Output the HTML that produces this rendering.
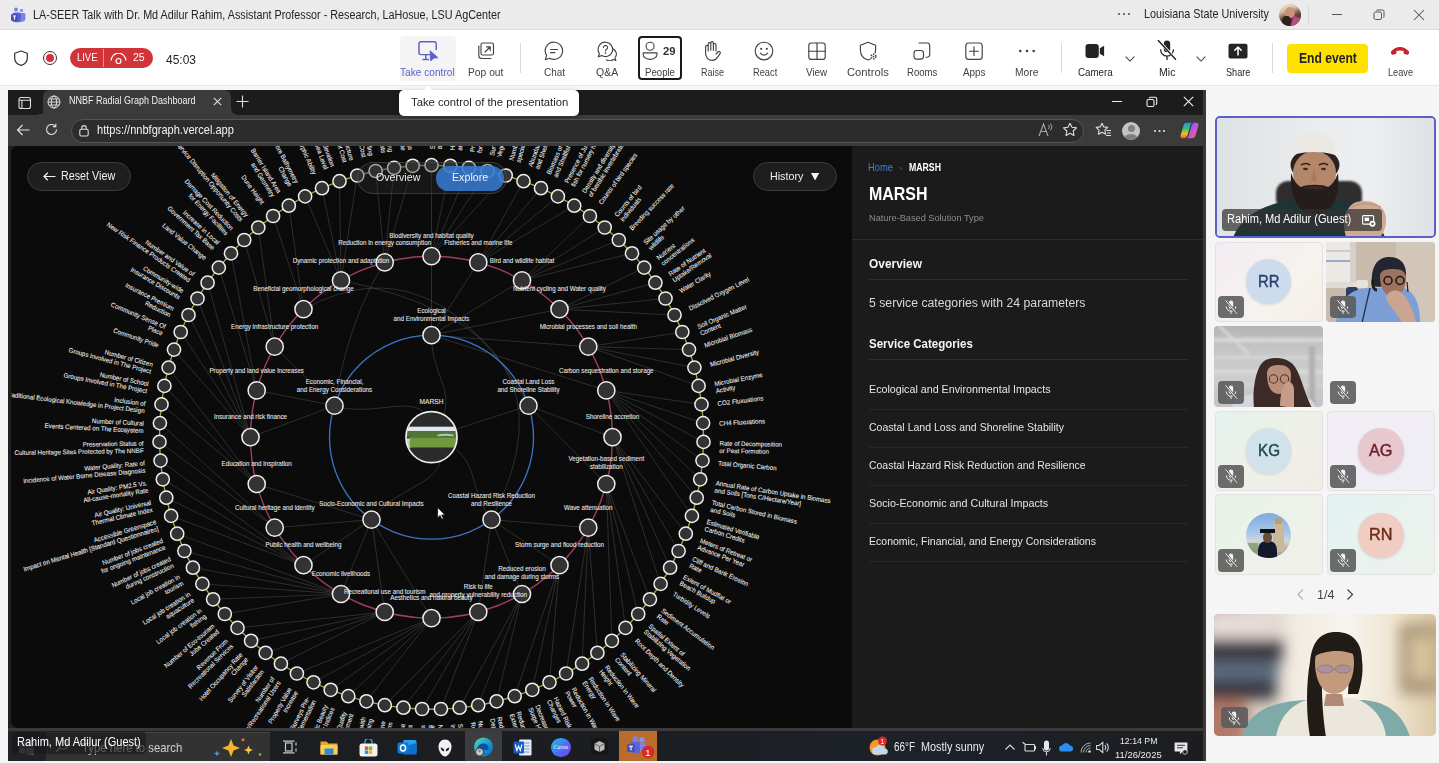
<!DOCTYPE html>
<html><head><meta charset="utf-8"><style>*{box-sizing:border-box;margin:0;padding:0}
html,body{width:1439px;height:763px;overflow:hidden;background:#f5f5f5;font-family:"Liberation Sans",sans-serif}
.a{position:absolute}
.t{position:absolute;white-space:nowrap;line-height:1}
.tile{position:absolute;border-radius:4px;overflow:hidden}
.mute{position:absolute;border-radius:4px;background:rgba(92,92,92,.9)}
.mute svg{position:absolute;left:0;top:0}
</style></head><body>
<div class="a" style="left:0;top:0;width:1439px;height:29px;background:#ebebeb"></div>
<div class="a" style="left:0;top:29px;width:1439px;height:1px;background:#dcdcdc"></div>
<svg class="a" style="left:10px;top:7px" width="16" height="16" viewBox="0 0 16 16"><circle cx="6" cy="2.6" r="2" fill="#7a80ea"/><circle cx="11.5" cy="3.5" r="1.7" fill="#8b90ee"/><path d="M9 6h5a1.4 1.4 0 0 1 1.4 1.4v3.8a3.5 3.5 0 0 1-3.5 3.5H9z" fill="#7b83eb"/><rect x="2.5" y="5.5" width="8.5" height="9.8" rx="2.3" fill="#5b62d6"/><rect x="1" y="7" width="7" height="7" rx="1.2" fill="#4650c0"/><path d="M2.9 9h3.2M4.5 9v3.6" stroke="#fff" stroke-width="1.1"/></svg>
<div class="t " style="left:33.00px;top:8.96px;font-size:12.21px;color:#242424;transform:scaleX(0.8842);transform-origin:0 0;">LA-SEER Talk with Dr. Md Adilur Rahim, Assistant Professor - Research, LaHosue, LSU AgCenter</div>
<svg class="a" style="left:1117px;top:11px" width="14" height="6" viewBox="0 0 14 6"><circle cx="2" cy="3" r="1.1" fill="#555"/><circle cx="7" cy="3" r="1.1" fill="#555"/><circle cx="12" cy="3" r="1.1" fill="#555"/></svg>
<div class="t " style="left:1143.80px;top:7.69px;font-size:12.06px;color:#242424;transform:scaleX(0.8970);transform-origin:0 0;">Louisiana State University</div>
<div class="a" style="left:1278.5px;top:3.5px;width:22.5px;height:22.5px;border-radius:50%;overflow:hidden;background:linear-gradient(160deg,#efe6da 0%,#d8c0a8 30%,#6a4a3a 55%,#3a2a28 80%,#b06090 100%)"><div style="position:absolute;left:6px;top:3px;width:10px;height:11px;border-radius:50%;background:#c8957a"></div><div style="position:absolute;left:3px;top:12px;width:9px;height:12px;border-radius:40%;background:#2e2220"></div><div style="position:absolute;left:13px;top:13px;width:8px;height:10px;background:#b84a8a;transform:rotate(20deg)"></div></div>
<div class="a" style="left:1308px;top:5px;width:1px;height:20px;background:#d8d8d8"></div>
<div class="a" style="left:1332px;top:14px;width:10px;height:1px;background:#555"></div>
<svg class="a" style="left:1373px;top:9px" width="12" height="12" viewBox="0 0 12 12"><rect x="1" y="3" width="7.5" height="7.5" rx="1.6" fill="none" stroke="#555" stroke-width="1"/><path d="M3.2 1.6A1.6 1.6 0 0 1 4.6 1H9.4A1.6 1.6 0 0 1 11 2.6V7.4A1.6 1.6 0 0 1 10.4 8.8" fill="none" stroke="#555" stroke-width="1"/></svg>
<svg class="a" style="left:1413px;top:9px" width="12" height="12" viewBox="0 0 12 12"><path d="M1 1l10 10M11 1L1 11" stroke="#555" stroke-width="1.05"/></svg>
<div class="a" style="left:0;top:30px;width:1439px;height:55px;background:#ffffff"></div>
<div class="a" style="left:0;top:85px;width:1439px;height:1px;background:#e8e8e8"></div>
<svg class="a" style="left:13px;top:50px" width="16" height="16" viewBox="0 0 16 16"><path d="M8 1l6.3 2.3v4.6c0 3.6-2.6 6.4-6.3 7.4C4.3 14.3 1.7 11.5 1.7 7.9V3.3z" fill="none" stroke="#333" stroke-width="1.2" stroke-linejoin="round"/></svg>
<div class="a" style="left:42.5px;top:50.8px;width:14.5px;height:14.5px;border-radius:50%;border:1.4px solid #333"></div>
<div class="a" style="left:45.7px;top:54px;width:8.1px;height:8.1px;border-radius:50%;background:#d92f3a"></div>
<div class="a" style="left:70px;top:48px;width:82.5px;height:20px;border-radius:10px;background:#d13438"></div>
<div class="t " style="left:77.00px;top:52.47px;font-size:10.90px;color:#fff;transform:scaleX(0.8666);transform-origin:0 0;">LIVE</div>
<div class="a" style="left:103px;top:49px;width:1px;height:18px;background:#ee8c90"></div>
<svg class="a" style="left:109.5px;top:52.5px" width="17" height="12" viewBox="0 0 17 12"><path d="M1.2 7.5a7.3 7.3 0 0 1 14.6 0" fill="none" stroke="#fff" stroke-width="1.2"/><circle cx="8.5" cy="8" r="2.5" fill="none" stroke="#fff" stroke-width="1.2"/></svg>
<div class="t " style="left:133.30px;top:52.47px;font-size:10.90px;color:#fff;transform:scaleX(0.9669);transform-origin:0 0;">25</div>
<div class="t " style="left:165.80px;top:52.60px;font-size:13.23px;color:#242424;transform:scaleX(0.9054);transform-origin:0 0;">45:03</div>
<div class="a" style="left:400px;top:36.3px;width:56px;height:44.5px;background:#f4f4f4;border-radius:4px"></div>
<svg class="a" style="left:418.2px;top:41.0px" width="20" height="20" viewBox="0 0 20 20"><g fill="none" stroke="#5b5fc7" stroke-width="1.45" stroke-linejoin="round"><path d="M12 13.6H2.8A1.8 1.8 0 0 1 1 11.8V2.6A1.8 1.8 0 0 1 2.8 .8h13.6A1.8 1.8 0 0 1 18.2 2.6V9"/><path d="M4.5 18.4h6.5M7.8 13.8v4.6"/></g><path d="M12.2 9.8L20 16.8 15.9 17.1 12.6 20z" fill="#5b5fc7" stroke="#5b5fc7" stroke-width=".8" stroke-linejoin="round"/></svg>
<div class="t " style="left:400.30px;top:66.79px;font-size:10.76px;color:#5b5fc7;transform:scaleX(0.9435);transform-origin:0 0;">Take control</div>
<div class="t " style="left:468.30px;top:66.79px;font-size:10.76px;color:#424242;transform:scaleX(0.9554);transform-origin:0 0;">Pop out</div>
<div class="t " style="left:543.70px;top:66.79px;font-size:10.76px;color:#424242;transform:scaleX(0.9253);transform-origin:0 0;">Chat</div>
<div class="t " style="left:595.80px;top:66.79px;font-size:10.76px;color:#424242;transform:scaleX(0.9759);transform-origin:0 0;">Q&amp;A</div>
<div class="t " style="left:644.70px;top:66.79px;font-size:10.76px;color:#424242;transform:scaleX(0.8954);transform-origin:0 0;">People</div>
<div class="t " style="left:700.70px;top:66.79px;font-size:10.76px;color:#424242;transform:scaleX(0.8369);transform-origin:0 0;">Raise</div>
<div class="t " style="left:752.50px;top:66.79px;font-size:10.76px;color:#424242;transform:scaleX(0.8620);transform-origin:0 0;">React</div>
<div class="t " style="left:806.30px;top:66.79px;font-size:10.76px;color:#424242;transform:scaleX(0.9168);transform-origin:0 0;">View</div>
<div class="t " style="left:846.50px;top:66.79px;font-size:10.76px;color:#424242;transform:scaleX(1.0433);transform-origin:0 0;">Controls</div>
<div class="t " style="left:906.70px;top:66.79px;font-size:10.76px;color:#424242;transform:scaleX(0.8887);transform-origin:0 0;">Rooms</div>
<div class="t " style="left:963.00px;top:66.79px;font-size:10.76px;color:#424242;transform:scaleX(0.9175);transform-origin:0 0;">Apps</div>
<div class="t " style="left:1015.30px;top:66.79px;font-size:10.76px;color:#424242;transform:scaleX(0.9542);transform-origin:0 0;">More</div>
<div class="t " style="left:1077.80px;top:66.79px;font-size:10.76px;color:#242424;transform:scaleX(0.9062);transform-origin:0 0;">Camera</div>
<div class="t " style="left:1158.70px;top:66.79px;font-size:10.76px;color:#242424;transform:scaleX(0.9865);transform-origin:0 0;">Mic</div>
<div class="t " style="left:1225.50px;top:66.79px;font-size:10.76px;color:#242424;transform:scaleX(0.8531);transform-origin:0 0;">Share</div>
<div class="t " style="left:1387.80px;top:66.79px;font-size:10.76px;color:#424242;transform:scaleX(0.8564);transform-origin:0 0;">Leave</div>
<svg class="a" style="left:476.2px;top:40.5px" width="20" height="20" viewBox="0 0 20 20"><g fill="none" stroke="#424242" stroke-width="1.15" stroke-linecap="round" stroke-linejoin="round"><rect x="5" y="2" width="12.5" height="12" rx="1.8"/><path d="M2.8 5v9.5a3 3 0 0 0 3 3H15"/><path d="M9 11l5-5M10.5 5.8H14.2V9.5"/></g></svg>
<div class="a" style="left:520px;top:43px;width:1px;height:30px;background:#d9d9d9"></div>
<svg class="a" style="left:544.2px;top:40.5px" width="20" height="20" viewBox="0 0 20 20"><g fill="none" stroke="#424242" stroke-width="1.15" stroke-linecap="round" stroke-linejoin="round"><path d="M10 1.2a8.6 8.6 0 1 1-4.4 16L1.3 18.6l1.3-4.2A8.6 8.6 0 0 1 10 1.2z"/><path d="M6.5 8.5h7M6.5 11.6h4.5"/></g></svg>
<svg class="a" style="left:596.7px;top:40.5px" width="20" height="20" viewBox="0 0 20 20"><g fill="none" stroke="#424242" stroke-width="1.15" stroke-linecap="round" stroke-linejoin="round"><path d="M8.5 1.2a7.2 7.2 0 1 1-3.7 13.4l-3.5 1.2 1.1-3.3A7.2 7.2 0 0 1 8.5 1.2z"/><path d="M15.6 7.6a6 6 0 0 1 2.4 9.4l.9 2.4-2.8-.9a6 6 0 0 1-6.6.4"/><path d="M6.4 6.4a2.1 2.1 0 1 1 3.2 1.9c-.8.5-1.1.9-1.1 1.7"/></g><circle cx="8.5" cy="12" r=".85" fill="#424242"/></svg>
<div class="a" style="left:637.5px;top:36.3px;width:44.5px;height:43.7px;border:2px solid #1a1a1a;border-radius:4px"></div>
<svg class="a" style="left:641.8px;top:40.8px" width="19" height="19" viewBox="0 0 20 20"><g fill="none" stroke="#424242" stroke-width="1.15" stroke-linecap="round" stroke-linejoin="round"><circle cx="8.5" cy="5.5" r="4.2"/><path d="M1.2 12.5h14.6v1.4c0 3.2-3.4 5.4-7.3 5.4S1.2 17.1 1.2 13.9z"/></g></svg>
<div class="t " style="left:663.30px;top:45.52px;font-size:10.61px;color:#333;font-weight:bold;transform:scaleX(1.0613);transform-origin:0 0;">29</div>
<svg class="a" style="left:702.0px;top:40.5px" width="20" height="20" viewBox="0 0 20 20"><g transform="translate(20,0) scale(-1,1)"><g fill="none" stroke="#424242" stroke-width="1.15" stroke-linecap="round" stroke-linejoin="round"><path d="M6 10V3.8a1.3 1.3 0 0 1 2.6 0V9.2M8.6 9.2V1.9a1.3 1.3 0 0 1 2.6 0v7.3M11.2 9.2V2.9a1.3 1.3 0 0 1 2.6 0V10M13.8 10V5.6a1.3 1.3 0 0 1 2.6 0v6.6c0 4-2.8 7.2-6.6 7.2-2.5 0-4.1-1.3-5.4-3.3L1.9 12.6a1.3 1.3 0 0 1 2.1-1.6L6 13"/></g></g></svg>
<svg class="a" style="left:754.2px;top:40.5px" width="20" height="20" viewBox="0 0 20 20"><g fill="none" stroke="#424242" stroke-width="1.15" stroke-linecap="round" stroke-linejoin="round"><circle cx="10" cy="10" r="8.8"/><path d="M6.3 12.2a4.6 4.6 0 0 0 7.4 0"/></g><circle cx="7.2" cy="7.8" r="1.1" fill="#424242"/><circle cx="12.8" cy="7.8" r="1.1" fill="#424242"/></svg>
<svg class="a" style="left:806.7px;top:40.5px" width="20" height="20" viewBox="0 0 20 20"><g fill="none" stroke="#424242" stroke-width="1.15" stroke-linecap="round" stroke-linejoin="round"><rect x="1.8" y="2" width="16.4" height="16.4" rx="2.5"/><path d="M10 2v16.4M1.8 10.2h16.4"/></g></svg>
<svg class="a" style="left:859.0px;top:40.5px" width="20" height="20" viewBox="0 0 20 20"><g fill="none" stroke="#424242" stroke-width="1.15" stroke-linecap="round" stroke-linejoin="round"><path d="M9 1.2l7.6 3v5c0 4.6-3 8.3-7.6 9.8C4.4 17.5 1.4 13.8 1.4 9.2v-5z"/></g><circle cx="14.5" cy="15.5" r="3.6" fill="#fff"/><g fill="none" stroke="#424242" stroke-width="1.6" stroke-dasharray="1.3 1"><circle cx="14.5" cy="15.5" r="2.3"/></g><circle cx="14.5" cy="15.5" r=".8" fill="#424242"/></svg>
<svg class="a" style="left:911.7px;top:40.5px" width="20" height="20" viewBox="0 0 20 20"><g fill="none" stroke="#424242" stroke-width="1.15" stroke-linecap="round" stroke-linejoin="round"><path d="M7 2h8.2a2.5 2.5 0 0 1 2.5 2.5v9.2a2.5 2.5 0 0 1-2.5 2.5H14"/><rect x="2" y="9.5" width="9.5" height="8.6" rx="2.5"/></g></svg>
<svg class="a" style="left:964.4px;top:40.5px" width="20" height="20" viewBox="0 0 20 20"><g fill="none" stroke="#424242" stroke-width="1.15" stroke-linecap="round" stroke-linejoin="round"><rect x="1.8" y="2" width="16.4" height="16.4" rx="3"/><path d="M10 5.8v8.8M5.6 10.2h8.8"/></g></svg>
<svg class="a" style="left:1016.5px;top:40.5px" width="20" height="20" viewBox="0 0 20 20"><circle cx="3.3" cy="10" r="1.35" fill="#424242"/><circle cx="10" cy="10" r="1.35" fill="#424242"/><circle cx="16.7" cy="10" r="1.35" fill="#424242"/></svg>
<div class="a" style="left:1061px;top:43px;width:1px;height:30px;background:#d9d9d9"></div>
<svg class="a" style="left:1085.0px;top:40.5px" width="20" height="20" viewBox="0 0 20 20"><rect x="0.5" y="3" width="13.3" height="14" rx="3" fill="#242424"/><path d="M14.8 7.3l4.3-2.6v10.6l-4.3-2.6z" fill="#242424"/></svg>
<svg class="a" style="left:1124.5px;top:56px" width="10" height="6" viewBox="0 0 10 6"><path d="M.6 .6l4.4 4.4 4.4-4.4" fill="none" stroke="#424242" stroke-width="1.05"/></svg>
<svg class="a" style="left:1156.6px;top:40.3px" width="20" height="20" viewBox="0 0 20 20"><rect x="6.8" y="0.5" width="6.4" height="11.8" rx="3.2" fill="#242424"/><path d="M3.6 9.8a6.4 6.4 0 0 0 12.8 0M10 16.2v3.6" fill="none" stroke="#242424" stroke-width="1.3" stroke-linecap="round"/><path d="M1.5 0.3l17 18.5" stroke="#fff" stroke-width="2.6"/><path d="M1.3 0.5l17.2 18.8" stroke="#242424" stroke-width="1.4" stroke-linecap="round"/></svg>
<svg class="a" style="left:1195.5px;top:56px" width="10" height="6" viewBox="0 0 10 6"><path d="M.6 .6l4.4 4.4 4.4-4.4" fill="none" stroke="#424242" stroke-width="1.05"/></svg>
<svg class="a" style="left:1227.5px;top:40.5px" width="20" height="20" viewBox="0 0 20 20"><rect x="0.5" y="2.8" width="19" height="14.6" rx="2" fill="#242424"/><path d="M10 14V6.2M6.8 9.3L10 6.1l3.2 3.2" fill="none" stroke="#fff" stroke-width="1.5" stroke-linecap="round" stroke-linejoin="round"/></svg>
<div class="a" style="left:1272px;top:43px;width:1px;height:30px;background:#d9d9d9"></div>
<div class="a" style="left:1286.5px;top:43.7px;width:81.5px;height:29px;background:#ffe100;border-radius:4px"></div>
<div class="t " style="left:1298.60px;top:51.12px;font-size:14.97px;color:#242424;font-weight:bold;transform:scaleX(0.8091);transform-origin:0 0;">End event</div>
<svg class="a" style="left:1390.3px;top:40.0px" width="20" height="20" viewBox="0 0 20 20"><path d="M0.8 11.8c2.4-3.4 5.8-4.9 9.2-4.9s6.8 1.5 9.2 4.9l-.5 2.3c-.2.6-.8.9-1.4.7l-3-.9a1 1 0 0 1-.7-1V11.1c-2.4-.8-4.8-.8-7.2 0v1.8a1 1 0 0 1-.7 1l-3 .9c-.6.2-1.2-.1-1.4-.7z" fill="#c4262e"/></svg>
<div class="a" style="left:0;top:86px;width:1439px;height:677px;background:#f5f5f5"></div>
<div class="a" style="left:8px;top:90px;width:1198px;height:671px;background:#202020"></div>
<div class="a" style="left:8px;top:90px;width:35px;height:25px;background:#1c1c1c;border-bottom-right-radius:6px"></div>
<div class="a" style="left:43px;top:90px;width:188px;height:25px;background:#3b3b3b;border-radius:7px 7px 0 0"></div>
<div class="a" style="left:231px;top:90px;width:975px;height:25px;background:#1c1c1c;border-bottom-left-radius:6px"></div>
<div class="a" style="left:8px;top:114px;width:1198px;height:32px;background:#3b3b3b"></div>
<div class="a" style="left:8px;top:108px;width:6px;height:6px;background:#3b3b3b"></div>
<div class="a" style="left:8px;top:90px;width:35px;height:25px;background:#1c1c1c;border-bottom-left-radius:0;border-bottom-right-radius:7px"></div>
<div class="a" style="left:225px;top:108px;width:12px;height:7px;background:#3b3b3b"></div>
<div class="a" style="left:231px;top:90px;width:975px;height:25px;background:#1c1c1c;border-bottom-left-radius:7px"></div>
<svg class="a" style="left:17.5px;top:95.5px" width="14" height="14" viewBox="0 0 14 14"><rect x="1" y="1.5" width="11.5" height="11" rx="2" fill="none" stroke="#ddd" stroke-width="1.1"/><path d="M1 4.3h11.5M3.9 4.3v8.2" stroke="#ddd" stroke-width="1.1"/></svg>
<svg class="a" style="left:47px;top:95px" width="14" height="14" viewBox="0 0 14 14"><g fill="none" stroke="#ddd" stroke-width="1"><circle cx="7" cy="7" r="6"/><ellipse cx="7" cy="7" rx="2.7" ry="6"/><path d="M1 7h12M1.8 4h10.4M1.8 10h10.4"/></g></svg>
<div class="t " style="left:68.60px;top:94.92px;font-size:11.19px;color:#f0f0f0;transform:scaleX(0.8033);transform-origin:0 0;">NNBF Radial Graph Dashboard</div>
<svg class="a" style="left:213px;top:96.5px" width="9" height="9" viewBox="0 0 9 9"><path d="M.8 .8l7.4 7.4M8.2 .8L.8 8.2" stroke="#ddd" stroke-width="1.1"/></svg>
<svg class="a" style="left:236px;top:94.5px" width="13" height="13" viewBox="0 0 13 13"><path d="M6.5 .5v12M.5 6.5h12" stroke="#ddd" stroke-width="1.1"/></svg>
<div class="a" style="left:1111.5px;top:101px;width:10px;height:1.2px;background:#eee"></div>
<svg class="a" style="left:1146px;top:96px" width="12" height="12" viewBox="0 0 12 12"><rect x="1" y="3.5" width="7" height="7" rx="1.5" fill="none" stroke="#eee" stroke-width="1.1"/><path d="M3.3 2.2A1.5 1.5 0 0 1 4.6 1.3h4.6A1.5 1.5 0 0 1 10.7 2.8v4.6A1.5 1.5 0 0 1 9.8 8.7" fill="none" stroke="#eee" stroke-width="1.1"/></svg>
<svg class="a" style="left:1183px;top:96px" width="11" height="11" viewBox="0 0 11 11"><path d="M.8 .8l9.4 9.4M10.2 .8L.8 10.2" stroke="#eee" stroke-width="1.1"/></svg>
<svg class="a" style="left:16px;top:124px" width="14" height="12" viewBox="0 0 14 12"><path d="M13.5 6H1.5M6.5 1L1.5 6l5 5" fill="none" stroke="#e6e6e6" stroke-width="1.1"/></svg>
<svg class="a" style="left:45px;top:123px" width="13" height="13" viewBox="0 0 13 13"><path d="M11.5 6.5a5 5 0 1 1-1.7-3.8" fill="none" stroke="#e6e6e6" stroke-width="1.1"/><path d="M10.8 .8v2.8H8" fill="none" stroke="#e6e6e6" stroke-width="1.1"/></svg>
<div class="a" style="left:71px;top:118.5px;width:1013px;height:24.5px;border-radius:12.5px;background:#2c2c2c;border:1px solid #555"></div>
<svg class="a" style="left:78px;top:124px" width="12" height="13" viewBox="0 0 12 13"><rect x="1.8" y="5.3" width="8.4" height="6.7" rx="1.4" fill="none" stroke="#ddd" stroke-width="1.1"/><path d="M3.8 5.3V3.8a2.2 2.2 0 0 1 4.4 0v1.5" fill="none" stroke="#ddd" stroke-width="1.1"/></svg>
<div class="t " style="left:97.20px;top:124.91px;font-size:11.92px;color:#f2f2f2;transform:scaleX(0.9274);transform-origin:0 0;">https://nnbfgraph.vercel.app</div>
<svg class="a" style="left:1038px;top:122px" width="15" height="16" viewBox="0 0 15 16"><path d="M1 14L5.5 2 10 14M2.8 9.5h5.4" fill="none" stroke="#aaa" stroke-width="1.1"/><path d="M10.5 3a3 3 0 0 1 0 4M12.5 1.5a5.5 5.5 0 0 1 0 7" fill="none" stroke="#aaa" stroke-width=".9"/></svg>
<svg class="a" style="left:1062px;top:122px" width="16" height="16" viewBox="0 0 16 16"><path d="M8 1.2l2 4.1 4.5.6-3.3 3.1.8 4.5L8 11.3l-4 2.2.8-4.5L1.5 5.9 6 5.3z" fill="none" stroke="#ddd" stroke-width="1.1" stroke-linejoin="round"/></svg>
<svg class="a" style="left:1095px;top:122px" width="17" height="16" viewBox="0 0 17 16"><path d="M7 1.2l1.8 3.7 4 .5-2.9 2.8.7 4L7 10.3l-3.6 2 .7-4L1.2 5.4l4-.5z" fill="none" stroke="#ddd" stroke-width="1.1" stroke-linejoin="round"/><path d="M11.5 8.5h4.5M12 11h4M11 13.5h5" stroke="#ddd" stroke-width="1.1"/></svg>
<div class="a" style="left:1122px;top:122px;width:18px;height:18px;border-radius:50%;background:#c4c4c4;overflow:hidden"><div style="position:absolute;left:5.5px;top:3px;width:7px;height:7px;border-radius:50%;background:#808080"></div><div style="position:absolute;left:2px;top:11.5px;width:14px;height:10px;border-radius:50%;background:#808080"></div></div>
<svg class="a" style="left:1153px;top:129px" width="13" height="4" viewBox="0 0 13 4"><circle cx="2" cy="2" r="1.1" fill="#ddd"/><circle cx="6.5" cy="2" r="1.1" fill="#ddd"/><circle cx="11" cy="2" r="1.1" fill="#ddd"/></svg>
<svg class="a" style="left:1180px;top:122px" width="19" height="17" viewBox="0 0 19 17"><defs><linearGradient id="cop1" x1="0" y1="0" x2="0" y2="1"><stop offset="0" stop-color="#2a8cf5"/><stop offset=".4" stop-color="#3cc46a"/><stop offset=".72" stop-color="#f5c02a"/><stop offset="1" stop-color="#f25a2a"/></linearGradient><linearGradient id="cop2" x1="0" y1="0" x2="1" y2="1"><stop offset="0" stop-color="#4a6cf0"/><stop offset=".45" stop-color="#b455e8"/><stop offset="1" stop-color="#ff6a6a"/></linearGradient></defs><path d="M7 .8h6.2c-1.4 0-2.2.7-2.7 2.2L7.6 12.8c-.6 2-1.7 3.4-3.8 3.4H2.6C1 16.2.1 15 .6 13.4L3.6 3.2C4.1 1.6 5.2.8 7 .8z" fill="url(#cop1)"/><path d="M12 16.2H5.8c1.4 0 2.2-.7 2.7-2.2l2.9-9.8c.6-2 1.7-3.4 3.8-3.4h1.2c1.6 0 2.5 1.2 2 2.8l-3 10.2c-.5 1.6-1.6 2.4-3.4 2.4z" fill="url(#cop2)"/></svg>
<div class="a" style="left:11px;top:146px;width:1193px;height:582px;background:#0b0b0b;border-radius:8px;overflow:hidden"><div style="position:absolute;left:0;top:0"><svg class="graph" width="840" height="582" viewBox="11 146 840 582">
<rect x="11" y="146" width="840" height="582" fill="#0b0b0b"/>
<g fill="none" stroke="#8c8c8c" stroke-opacity="0.36" stroke-width="0.75">
<path d="M431.5,437.2C463.8,392.7 431.5,382.2 431.5,335.2"/>
<path d="M431.5,437.2C483.8,420.2 483.8,420.2 528.5,405.7"/>
<path d="M431.5,437.2C483.8,454.2 463.8,481.7 491.5,519.7"/>
<path d="M431.5,437.2C463.8,481.7 399.2,481.7 371.5,519.7"/>
<path d="M431.5,437.2C431.5,382.2 379.2,420.2 334.5,405.7"/>
<path d="M431.5,335.2L431.5,256.2"/>
<path d="M431.5,335.2L478.3,262.4"/>
<path d="M431.5,335.2L522.0,280.4"/>
<path d="M431.5,335.2L559.5,309.2"/>
<path d="M431.5,335.2L588.3,346.7"/>
<path d="M431.5,335.2L606.3,390.4"/>
<path d="M528.5,405.7L612.5,437.2"/>
<path d="M528.5,405.7L606.3,484.0"/>
<path d="M528.5,405.7Q434,238 303.5,309.2"/>
<path d="M491.5,519.7L588.3,527.7"/>
<path d="M491.5,519.7L559.5,565.2"/>
<path d="M491.5,519.7L522.0,594.0"/>
<path d="M491.5,519.7L478.3,612.0"/>
<path d="M491.5,519.7Q590,330 341.0,280.4"/>
<path d="M371.5,519.7L431.5,618.2"/>
<path d="M371.5,519.7L384.7,612.0"/>
<path d="M371.5,519.7L341.0,594.0"/>
<path d="M371.5,519.7L303.5,565.2"/>
<path d="M371.5,519.7L274.7,527.7"/>
<path d="M371.5,519.7L256.7,484.0"/>
<path d="M334.5,405.7L250.5,437.2"/>
<path d="M334.5,405.7L256.7,390.4"/>
<path d="M334.5,405.7L274.7,346.7"/>
<path d="M334.5,405.7Q348,320 384.7,262.4"/>
<path d="M431.5,256.2L431.5,165.2"/>
<path d="M431.5,256.2L450.3,165.8"/>
<path d="M431.5,256.2L468.9,167.8"/>
<path d="M431.5,256.2L487.4,171.0"/>
<path d="M431.5,256.2L505.7,175.5"/>
<path d="M478.3,262.4L523.5,181.2"/>
<path d="M478.3,262.4L541.0,188.2"/>
<path d="M478.3,262.4L557.9,196.4"/>
<path d="M478.3,262.4L574.2,205.7"/>
<path d="M522.0,280.4L589.9,216.0"/>
<path d="M522.0,280.4L604.7,227.5"/>
<path d="M522.0,280.4L618.8,240.0"/>
<path d="M522.0,280.4L632.0,253.3"/>
<path d="M559.5,309.2L644.2,267.6"/>
<path d="M559.5,309.2L655.4,282.7"/>
<path d="M559.5,309.2L665.5,298.5"/>
<path d="M559.5,309.2L674.5,315.0"/>
<path d="M588.3,346.7L682.3,332.0"/>
<path d="M588.3,346.7L689.0,349.6"/>
<path d="M588.3,346.7L694.4,367.6"/>
<path d="M588.3,346.7L698.6,385.9"/>
<path d="M606.3,390.4L701.5,404.4"/>
<path d="M606.3,390.4L703.1,423.1"/>
<path d="M606.3,390.4L703.5,441.9"/>
<path d="M606.3,390.4L702.5,460.6"/>
<path d="M606.3,390.4L700.2,479.3"/>
<path d="M606.3,390.4L696.7,497.7"/>
<path d="M606.3,390.4L691.9,515.9"/>
<path d="M612.5,437.2L685.8,533.7"/>
<path d="M612.5,437.2L678.6,551.0"/>
<path d="M612.5,437.2L670.1,567.7"/>
<path d="M612.5,437.2L660.6,583.9"/>
<path d="M606.3,484.0L649.9,599.3"/>
<path d="M606.3,484.0L638.2,614.0"/>
<path d="M606.3,484.0L625.5,627.9"/>
<path d="M606.3,484.0L611.9,640.8"/>
<path d="M588.3,527.7L597.4,652.8"/>
<path d="M588.3,527.7L582.1,663.7"/>
<path d="M588.3,527.7L566.1,673.5"/>
<path d="M559.5,565.2L549.5,682.3"/>
<path d="M559.5,565.2L532.3,689.8"/>
<path d="M559.5,565.2L514.7,696.2"/>
<path d="M522.0,594.0L496.6,701.3"/>
<path d="M522.0,594.0L478.2,705.2"/>
<path d="M522.0,594.0L459.6,707.7"/>
<path d="M478.3,612.0L440.9,709.0"/>
<path d="M478.3,612.0L422.1,709.0"/>
<path d="M478.3,612.0L403.4,707.7"/>
<path d="M478.3,612.0L384.8,705.2"/>
<path d="M431.5,618.2L366.4,701.3"/>
<path d="M431.5,618.2L348.3,696.2"/>
<path d="M431.5,618.2L330.7,689.8"/>
<path d="M431.5,618.2L313.5,682.3"/>
<path d="M431.5,618.2L296.9,673.5"/>
<path d="M384.7,612.0L280.9,663.7"/>
<path d="M384.7,612.0L265.6,652.8"/>
<path d="M384.7,612.0L251.1,640.8"/>
<path d="M384.7,612.0L237.5,627.9"/>
<path d="M341.0,594.0L224.8,614.0"/>
<path d="M341.0,594.0L213.1,599.3"/>
<path d="M341.0,594.0L202.4,583.9"/>
<path d="M341.0,594.0L192.9,567.7"/>
<path d="M341.0,594.0L184.4,551.0"/>
<path d="M341.0,594.0L177.2,533.7"/>
<path d="M303.5,565.2L171.1,515.9"/>
<path d="M303.5,565.2L166.3,497.7"/>
<path d="M303.5,565.2L162.8,479.3"/>
<path d="M303.5,565.2L160.5,460.6"/>
<path d="M274.7,527.7L159.5,441.9"/>
<path d="M274.7,527.7L159.9,423.1"/>
<path d="M256.7,484.0L161.5,404.4"/>
<path d="M256.7,484.0L164.4,385.9"/>
<path d="M256.7,484.0L168.6,367.6"/>
<path d="M250.5,437.2L174.0,349.6"/>
<path d="M250.5,437.2L180.7,332.0"/>
<path d="M250.5,437.2L188.5,315.0"/>
<path d="M250.5,437.2L197.5,298.5"/>
<path d="M250.5,437.2L207.6,282.7"/>
<path d="M256.7,390.4L218.8,267.6"/>
<path d="M256.7,390.4L231.0,253.3"/>
<path d="M274.7,346.7L244.2,240.0"/>
<path d="M274.7,346.7L258.3,227.5"/>
<path d="M303.5,309.2L273.1,216.0"/>
<path d="M303.5,309.2L288.8,205.7"/>
<path d="M341.0,280.4L305.1,196.4"/>
<path d="M341.0,280.4L322.0,188.2"/>
<path d="M341.0,280.4L339.5,181.2"/>
<path d="M341.0,280.4L357.3,175.5"/>
<path d="M384.7,262.4L375.6,171.0"/>
<path d="M384.7,262.4L394.1,167.8"/>
<path d="M384.7,262.4L412.7,165.8"/>
</g>
<circle cx="431.5" cy="437.2" r="102.0" fill="none" stroke="#3f72c4" stroke-width="1.3"/>
<circle cx="431.5" cy="437.2" r="181.0" fill="none" stroke="#a33d5e" stroke-width="1.4"/>
<circle cx="431.5" cy="437.2" r="272.0" fill="none" stroke="#7fb33a" stroke-width="1.4"/>
<g fill="#333" stroke="#eee" stroke-width="1.5">
<circle cx="431.5" cy="165.2" r="6.6"/>
<circle cx="450.3" cy="165.8" r="6.6"/>
<circle cx="468.9" cy="167.8" r="6.6"/>
<circle cx="487.4" cy="171.0" r="6.6"/>
<circle cx="505.7" cy="175.5" r="6.6"/>
<circle cx="523.5" cy="181.2" r="6.6"/>
<circle cx="541.0" cy="188.2" r="6.6"/>
<circle cx="557.9" cy="196.4" r="6.6"/>
<circle cx="574.2" cy="205.7" r="6.6"/>
<circle cx="589.9" cy="216.0" r="6.6"/>
<circle cx="604.7" cy="227.5" r="6.6"/>
<circle cx="618.8" cy="240.0" r="6.6"/>
<circle cx="632.0" cy="253.3" r="6.6"/>
<circle cx="644.2" cy="267.6" r="6.6"/>
<circle cx="655.4" cy="282.7" r="6.6"/>
<circle cx="665.5" cy="298.5" r="6.6"/>
<circle cx="674.5" cy="315.0" r="6.6"/>
<circle cx="682.3" cy="332.0" r="6.6"/>
<circle cx="689.0" cy="349.6" r="6.6"/>
<circle cx="694.4" cy="367.6" r="6.6"/>
<circle cx="698.6" cy="385.9" r="6.6"/>
<circle cx="701.5" cy="404.4" r="6.6"/>
<circle cx="703.1" cy="423.1" r="6.6"/>
<circle cx="703.5" cy="441.9" r="6.6"/>
<circle cx="702.5" cy="460.6" r="6.6"/>
<circle cx="700.2" cy="479.3" r="6.6"/>
<circle cx="696.7" cy="497.7" r="6.6"/>
<circle cx="691.9" cy="515.9" r="6.6"/>
<circle cx="685.8" cy="533.7" r="6.6"/>
<circle cx="678.6" cy="551.0" r="6.6"/>
<circle cx="670.1" cy="567.7" r="6.6"/>
<circle cx="660.6" cy="583.9" r="6.6"/>
<circle cx="649.9" cy="599.3" r="6.6"/>
<circle cx="638.2" cy="614.0" r="6.6"/>
<circle cx="625.5" cy="627.9" r="6.6"/>
<circle cx="611.9" cy="640.8" r="6.6"/>
<circle cx="597.4" cy="652.8" r="6.6"/>
<circle cx="582.1" cy="663.7" r="6.6"/>
<circle cx="566.1" cy="673.5" r="6.6"/>
<circle cx="549.5" cy="682.3" r="6.6"/>
<circle cx="532.3" cy="689.8" r="6.6"/>
<circle cx="514.7" cy="696.2" r="6.6"/>
<circle cx="496.6" cy="701.3" r="6.6"/>
<circle cx="478.2" cy="705.2" r="6.6"/>
<circle cx="459.6" cy="707.7" r="6.6"/>
<circle cx="440.9" cy="709.0" r="6.6"/>
<circle cx="422.1" cy="709.0" r="6.6"/>
<circle cx="403.4" cy="707.7" r="6.6"/>
<circle cx="384.8" cy="705.2" r="6.6"/>
<circle cx="366.4" cy="701.3" r="6.6"/>
<circle cx="348.3" cy="696.2" r="6.6"/>
<circle cx="330.7" cy="689.8" r="6.6"/>
<circle cx="313.5" cy="682.3" r="6.6"/>
<circle cx="296.9" cy="673.5" r="6.6"/>
<circle cx="280.9" cy="663.7" r="6.6"/>
<circle cx="265.6" cy="652.8" r="6.6"/>
<circle cx="251.1" cy="640.8" r="6.6"/>
<circle cx="237.5" cy="627.9" r="6.6"/>
<circle cx="224.8" cy="614.0" r="6.6"/>
<circle cx="213.1" cy="599.3" r="6.6"/>
<circle cx="202.4" cy="583.9" r="6.6"/>
<circle cx="192.9" cy="567.7" r="6.6"/>
<circle cx="184.4" cy="551.0" r="6.6"/>
<circle cx="177.2" cy="533.7" r="6.6"/>
<circle cx="171.1" cy="515.9" r="6.6"/>
<circle cx="166.3" cy="497.7" r="6.6"/>
<circle cx="162.8" cy="479.3" r="6.6"/>
<circle cx="160.5" cy="460.6" r="6.6"/>
<circle cx="159.5" cy="441.9" r="6.6"/>
<circle cx="159.9" cy="423.1" r="6.6"/>
<circle cx="161.5" cy="404.4" r="6.6"/>
<circle cx="164.4" cy="385.9" r="6.6"/>
<circle cx="168.6" cy="367.6" r="6.6"/>
<circle cx="174.0" cy="349.6" r="6.6"/>
<circle cx="180.7" cy="332.0" r="6.6"/>
<circle cx="188.5" cy="315.0" r="6.6"/>
<circle cx="197.5" cy="298.5" r="6.6"/>
<circle cx="207.6" cy="282.7" r="6.6"/>
<circle cx="218.8" cy="267.6" r="6.6"/>
<circle cx="231.0" cy="253.3" r="6.6"/>
<circle cx="244.2" cy="240.0" r="6.6"/>
<circle cx="258.3" cy="227.5" r="6.6"/>
<circle cx="273.1" cy="216.0" r="6.6"/>
<circle cx="288.8" cy="205.7" r="6.6"/>
<circle cx="305.1" cy="196.4" r="6.6"/>
<circle cx="322.0" cy="188.2" r="6.6"/>
<circle cx="339.5" cy="181.2" r="6.6"/>
<circle cx="357.3" cy="175.5" r="6.6"/>
<circle cx="375.6" cy="171.0" r="6.6"/>
<circle cx="394.1" cy="167.8" r="6.6"/>
<circle cx="412.7" cy="165.8" r="6.6"/>
<circle cx="431.5" cy="256.2" r="8.6"/>
<circle cx="478.3" cy="262.4" r="8.6"/>
<circle cx="522.0" cy="280.4" r="8.6"/>
<circle cx="559.5" cy="309.2" r="8.6"/>
<circle cx="588.3" cy="346.7" r="8.6"/>
<circle cx="606.3" cy="390.4" r="8.6"/>
<circle cx="612.5" cy="437.2" r="8.6"/>
<circle cx="606.3" cy="484.0" r="8.6"/>
<circle cx="588.3" cy="527.7" r="8.6"/>
<circle cx="559.5" cy="565.2" r="8.6"/>
<circle cx="522.0" cy="594.0" r="8.6"/>
<circle cx="478.3" cy="612.0" r="8.6"/>
<circle cx="431.5" cy="618.2" r="8.6"/>
<circle cx="384.7" cy="612.0" r="8.6"/>
<circle cx="341.0" cy="594.0" r="8.6"/>
<circle cx="303.5" cy="565.2" r="8.6"/>
<circle cx="274.7" cy="527.7" r="8.6"/>
<circle cx="256.7" cy="484.0" r="8.6"/>
<circle cx="250.5" cy="437.2" r="8.6"/>
<circle cx="256.7" cy="390.4" r="8.6"/>
<circle cx="274.7" cy="346.7" r="8.6"/>
<circle cx="303.5" cy="309.2" r="8.6"/>
<circle cx="341.0" cy="280.4" r="8.6"/>
<circle cx="384.7" cy="262.4" r="8.6"/>
<circle cx="431.5" cy="335.2" r="8.6"/>
<circle cx="528.5" cy="405.7" r="8.6"/>
<circle cx="491.5" cy="519.7" r="8.6"/>
<circle cx="371.5" cy="519.7" r="8.6"/>
<circle cx="334.5" cy="405.7" r="8.6"/>
</g>
<g fill="#f0f0f0" stroke="#f0f0f0" stroke-width="0.07" font-family="Liberation Sans, sans-serif" font-size="6.6">
<text transform="translate(431.5,149.2) rotate(-90.00) scale(0.94,1)" text-anchor="start"><tspan x="0" y="3.4">Species Richness</tspan><tspan x="0" y="10.7">and Evenness</tspan></text>
<text transform="translate(451.4,149.9) rotate(-86.04) scale(0.94,1)" text-anchor="start"><tspan x="0" y="3.4">Habitat Extent</tspan><tspan x="0" y="10.7">and Connectivity</tspan></text>
<text transform="translate(471.1,151.9) rotate(-82.09) scale(0.94,1)" text-anchor="start"><tspan x="0" y="3.4">Presence of Indicator</tspan><tspan x="0" y="10.7">for Habitat Health</tspan></text>
<text transform="translate(490.7,155.4) rotate(-78.13) scale(0.94,1)" text-anchor="start"><tspan x="0" y="3.4">Survival of Planted</tspan><tspan x="0" y="10.7">Vegetation</tspan></text>
<text transform="translate(510.0,160.1) rotate(-74.18) scale(0.94,1)" text-anchor="start"><tspan x="0" y="3.4">Number of Native</tspan><tspan x="0" y="10.7">species</tspan></text>
<text transform="translate(529.0,166.2) rotate(-70.22) scale(0.94,1)" text-anchor="start"><tspan x="0" y="3.4">Abundance of Fish</tspan><tspan x="0" y="10.7">and Shellfish</tspan></text>
<text transform="translate(547.4,173.6) rotate(-66.26) scale(0.94,1)" text-anchor="start"><tspan x="0" y="3.4">Biomass of Fish</tspan><tspan x="0" y="10.7">and Shellfish</tspan></text>
<text transform="translate(565.3,182.2) rotate(-62.31) scale(0.94,1)" text-anchor="start"><tspan x="0" y="3.4">Presence of Juvenile</tspan><tspan x="0" y="10.7">fish for nursery habitat</tspan></text>
<text transform="translate(582.6,192.0) rotate(-58.35) scale(0.94,1)" text-anchor="start"><tspan x="0" y="3.4">Density and diversity</tspan><tspan x="0" y="10.7">of benthic invertebrates</tspan></text>
<text transform="translate(599.2,203.0) rotate(-54.40) scale(0.94,1)" text-anchor="start"><tspan x="0" y="3.4">Counts of bird species</tspan></text>
<text transform="translate(614.9,215.2) rotate(-50.44) scale(0.94,1)" text-anchor="start"><tspan x="0" y="3.4">Counts of bird</tspan><tspan x="0" y="10.7">individuals</tspan></text>
<text transform="translate(629.8,228.3) rotate(-46.48) scale(0.94,1)" text-anchor="start"><tspan x="0" y="3.4">Breeding success rate</tspan></text>
<text transform="translate(643.7,242.5) rotate(-42.53) scale(0.94,1)" text-anchor="start"><tspan x="0" y="3.4">Site usage by other</tspan><tspan x="0" y="10.7">wildlife</tspan></text>
<text transform="translate(656.7,257.6) rotate(-38.57) scale(0.94,1)" text-anchor="start"><tspan x="0" y="3.4">Nutrient</tspan><tspan x="0" y="10.7">concentrations</tspan></text>
<text transform="translate(668.5,273.6) rotate(-34.62) scale(0.94,1)" text-anchor="start"><tspan x="0" y="3.4">Rate of Nutrient</tspan><tspan x="0" y="10.7">Uptake/Removal</tspan></text>
<text transform="translate(679.2,290.3) rotate(-30.66) scale(0.94,1)" text-anchor="start"><tspan x="0" y="3.4">Water Clarity</tspan></text>
<text transform="translate(688.8,307.8) rotate(-26.70) scale(0.94,1)" text-anchor="start"><tspan x="0" y="3.4">Dissolved Oxygen Level</tspan></text>
<text transform="translate(697.1,325.8) rotate(-22.75) scale(0.94,1)" text-anchor="start"><tspan x="0" y="3.4">Soil Organic Matter</tspan><tspan x="0" y="10.7">Content</tspan></text>
<text transform="translate(704.1,344.4) rotate(-18.79) scale(0.94,1)" text-anchor="start"><tspan x="0" y="3.4">Microbial Biomass</tspan></text>
<text transform="translate(709.9,363.5) rotate(-14.84) scale(0.94,1)" text-anchor="start"><tspan x="0" y="3.4">Microbial Diversity</tspan></text>
<text transform="translate(714.3,382.8) rotate(-10.88) scale(0.94,1)" text-anchor="start"><tspan x="0" y="3.4">Microbial Enzyme</tspan><tspan x="0" y="10.7">Activity</tspan></text>
<text transform="translate(717.4,402.5) rotate(-6.92) scale(0.94,1)" text-anchor="start"><tspan x="0" y="3.4">CO2 Fluxuations</tspan></text>
<text transform="translate(719.1,422.3) rotate(-2.97) scale(0.94,1)" text-anchor="start"><tspan x="0" y="3.4">CH4 Fluxuations</tspan></text>
<text transform="translate(719.5,442.2) rotate(0.99) scale(0.94,1)" text-anchor="start"><tspan x="0" y="3.4">Rate of Decomposition</tspan><tspan x="0" y="10.7">or Peat Formation</tspan></text>
<text transform="translate(718.4,462.0) rotate(4.95) scale(0.94,1)" text-anchor="start"><tspan x="0" y="3.4">Total Organic Carbon</tspan></text>
<text transform="translate(716.0,481.8) rotate(8.90) scale(0.94,1)" text-anchor="start"><tspan x="0" y="3.4">Annual Rate of Carbon Uptake in Biomass</tspan><tspan x="0" y="10.7">and Soils [Tons C/Hectare/Year]</tspan></text>
<text transform="translate(712.3,501.3) rotate(12.86) scale(0.94,1)" text-anchor="start"><tspan x="0" y="3.4">Total Carbon Stored in Biomass</tspan><tspan x="0" y="10.7">and Soils</tspan></text>
<text transform="translate(707.2,520.5) rotate(16.81) scale(0.94,1)" text-anchor="start"><tspan x="0" y="3.4">Estimated Verifiable</tspan><tspan x="0" y="10.7">Carbon Credits</tspan></text>
<text transform="translate(700.8,539.3) rotate(20.77) scale(0.94,1)" text-anchor="start"><tspan x="0" y="3.4">Meters of Retreat or</tspan><tspan x="0" y="10.7">Advance Per Year</tspan></text>
<text transform="translate(693.1,557.7) rotate(24.73) scale(0.94,1)" text-anchor="start"><tspan x="0" y="3.4">Cliff and Bank Erosion</tspan><tspan x="0" y="10.7">Rate</tspan></text>
<text transform="translate(684.2,575.4) rotate(28.68) scale(0.94,1)" text-anchor="start"><tspan x="0" y="3.4">Extent of Mudflat or</tspan><tspan x="0" y="10.7">Beach Buildup</tspan></text>
<text transform="translate(674.0,592.5) rotate(32.64) scale(0.94,1)" text-anchor="start"><tspan x="0" y="3.4">Turbidity Levels</tspan></text>
<text transform="translate(662.7,608.9) rotate(36.59) scale(0.94,1)" text-anchor="start"><tspan x="0" y="3.4">Sediment Accumulation</tspan><tspan x="0" y="10.7">Rate</tspan></text>
<text transform="translate(650.3,624.4) rotate(40.55) scale(0.94,1)" text-anchor="start"><tspan x="0" y="3.4">Spatial Extent of</tspan><tspan x="0" y="10.7">Stabilizing Vegetation</tspan></text>
<text transform="translate(636.9,639.1) rotate(44.51) scale(0.94,1)" text-anchor="start"><tspan x="0" y="3.4">Root Depth and Density</tspan></text>
<text transform="translate(622.5,652.8) rotate(48.46) scale(0.94,1)" text-anchor="start"><tspan x="0" y="3.4">Stabilizing Mineral</tspan><tspan x="0" y="10.7">Content</tspan></text>
<text transform="translate(607.2,665.4) rotate(52.42) scale(0.94,1)" text-anchor="start"><tspan x="0" y="3.4">Reduction in Wave</tspan><tspan x="0" y="10.7">Height</tspan></text>
<text transform="translate(591.0,677.0) rotate(56.37) scale(0.94,1)" text-anchor="start"><tspan x="0" y="3.4">Reduction in Wave</tspan><tspan x="0" y="10.7">Energy</tspan></text>
<text transform="translate(574.1,687.4) rotate(60.33) scale(0.94,1)" text-anchor="start"><tspan x="0" y="3.4">Reduction in Wave</tspan><tspan x="0" y="10.7">Power</tspan></text>
<text transform="translate(556.5,696.7) rotate(64.29) scale(0.94,1)" text-anchor="start"><tspan x="0" y="3.4">Hazard Risk Index</tspan><tspan x="0" y="10.7">Changes</tspan></text>
<text transform="translate(538.3,704.7) rotate(68.24) scale(0.94,1)" text-anchor="start"><tspan x="0" y="3.4">Decrease in Storm</tspan><tspan x="0" y="10.7">Surge Height</tspan></text>
<text transform="translate(519.6,711.4) rotate(72.20) scale(0.94,1)" text-anchor="start"><tspan x="0" y="3.4">Reduction in Flood</tspan><tspan x="0" y="10.7">Extent</tspan></text>
<text transform="translate(500.4,716.8) rotate(76.15) scale(0.94,1)" text-anchor="start"><tspan x="0" y="3.4">Reduced Flood</tspan><tspan x="0" y="10.7">Depth</tspan></text>
<text transform="translate(481.0,720.9) rotate(80.11) scale(0.94,1)" text-anchor="start"><tspan x="0" y="3.4">Number of Structures</tspan><tspan x="0" y="10.7">Repaired</tspan></text>
<text transform="translate(461.3,723.7) rotate(84.07) scale(0.94,1)" text-anchor="start"><tspan x="0" y="3.4">Structures</tspan><tspan x="0" y="10.7">in floodplain</tspan></text>
<text transform="translate(441.4,725.0) rotate(88.02) scale(0.94,1)" text-anchor="start"><tspan x="0" y="3.4">Number of Lives</tspan><tspan x="0" y="10.7">at Risk</tspan></text>
<text transform="translate(421.6,725.0) rotate(-88.02) scale(0.94,1)" text-anchor="end"><tspan x="0" y="3.4">Damage Claims</tspan><tspan x="0" y="10.7">Reduction</tspan></text>
<text transform="translate(401.7,723.7) rotate(-84.07) scale(0.94,1)" text-anchor="end"><tspan x="0" y="3.4">Emergency Response</tspan><tspan x="0" y="10.7">Cost Savings</tspan></text>
<text transform="translate(382.0,720.9) rotate(-80.11) scale(0.94,1)" text-anchor="end"><tspan x="0" y="3.4">Recovery Time</tspan><tspan x="0" y="10.7">After Storm</tspan></text>
<text transform="translate(362.6,716.8) rotate(-76.15) scale(0.94,1)" text-anchor="end"><tspan x="0" y="3.4">Scenic Value with</tspan><tspan x="0" y="10.7">Vegetation Screening</tspan></text>
<text transform="translate(343.4,711.4) rotate(-72.20) scale(0.94,1)" text-anchor="end"><tspan x="0" y="3.4">Visual Quality</tspan><tspan x="0" y="10.7">Assessment</tspan></text>
<text transform="translate(324.7,704.7) rotate(-68.24) scale(0.94,1)" text-anchor="end"><tspan x="0" y="3.4">Scenic Beauty</tspan><tspan x="0" y="10.7">Quality Indices</tspan></text>
<text transform="translate(306.5,696.7) rotate(-64.29) scale(0.94,1)" text-anchor="end"><tspan x="0" y="3.4">Community Surveys Pre-</tspan><tspan x="0" y="10.7">and Post Implementation</tspan></text>
<text transform="translate(288.9,687.4) rotate(-60.33) scale(0.94,1)" text-anchor="end"><tspan x="0" y="3.4">Property Value</tspan><tspan x="0" y="10.7">Increase</tspan></text>
<text transform="translate(272.0,677.0) rotate(-56.37) scale(0.94,1)" text-anchor="end"><tspan x="0" y="3.4">Number of</tspan><tspan x="0" y="10.7">Tourists/Recreational Users</tspan></text>
<text transform="translate(255.8,665.4) rotate(-52.42) scale(0.94,1)" text-anchor="end"><tspan x="0" y="3.4">Survey of Visitor</tspan><tspan x="0" y="10.7">Satisfaction</tspan></text>
<text transform="translate(240.5,652.8) rotate(-48.46) scale(0.94,1)" text-anchor="end"><tspan x="0" y="3.4">Hotel Occupancy Rate</tspan><tspan x="0" y="10.7">Change</tspan></text>
<text transform="translate(226.1,639.1) rotate(-44.51) scale(0.94,1)" text-anchor="end"><tspan x="0" y="3.4">Revenue From</tspan><tspan x="0" y="10.7">Recreational Services</tspan></text>
<text transform="translate(212.7,624.4) rotate(-40.55) scale(0.94,1)" text-anchor="end"><tspan x="0" y="3.4">Number of Eco-tourism</tspan><tspan x="0" y="10.7">Jobs Created</tspan></text>
<text transform="translate(200.3,608.9) rotate(-36.59) scale(0.94,1)" text-anchor="end"><tspan x="0" y="3.4">Local job creation in</tspan><tspan x="0" y="10.7">fishing</tspan></text>
<text transform="translate(189.0,592.5) rotate(-32.64) scale(0.94,1)" text-anchor="end"><tspan x="0" y="3.4">Local job creation in</tspan><tspan x="0" y="10.7">aquaculture</tspan></text>
<text transform="translate(178.8,575.4) rotate(-28.68) scale(0.94,1)" text-anchor="end"><tspan x="0" y="3.4">Local job creation in</tspan><tspan x="0" y="10.7">tourism</tspan></text>
<text transform="translate(169.9,557.7) rotate(-24.73) scale(0.94,1)" text-anchor="end"><tspan x="0" y="3.4">Number of jobs created</tspan><tspan x="0" y="10.7">during construction</tspan></text>
<text transform="translate(162.2,539.3) rotate(-20.77) scale(0.94,1)" text-anchor="end"><tspan x="0" y="3.4">Number of jobs created</tspan><tspan x="0" y="10.7">for ongoing maintenance</tspan></text>
<text transform="translate(155.8,520.5) rotate(-16.81) scale(0.94,1)" text-anchor="end"><tspan x="0" y="3.4">Accessible Greenspace</tspan><tspan x="0" y="10.7">Impact on Mental Health [Standard Questionnaires]</tspan></text>
<text transform="translate(150.7,501.3) rotate(-12.86) scale(0.94,1)" text-anchor="end"><tspan x="0" y="3.4">Air Quality: Universal</tspan><tspan x="0" y="10.7">Thermal Climate Index</tspan></text>
<text transform="translate(147.0,481.8) rotate(-8.90) scale(0.94,1)" text-anchor="end"><tspan x="0" y="3.4">Air Quality: PM2.5 Vs.</tspan><tspan x="0" y="10.7">All-cause-mortality Rate</tspan></text>
<text transform="translate(144.6,462.0) rotate(-4.95) scale(0.94,1)" text-anchor="end"><tspan x="0" y="3.4">Water Quality: Rate of</tspan><tspan x="0" y="10.7">Incidence of Water Borne Disease Diagnosis</tspan></text>
<text transform="translate(143.5,442.2) rotate(-0.99) scale(0.94,1)" text-anchor="end"><tspan x="0" y="3.4">Preservation Status of</tspan><tspan x="0" y="10.7">Cultural Heritage Sites Protected by The NNBF</tspan></text>
<text transform="translate(143.9,422.3) rotate(2.97) scale(0.94,1)" text-anchor="end"><tspan x="0" y="3.4">Number of Cultural</tspan><tspan x="0" y="10.7">Events Centered on The Ecosystem</tspan></text>
<text transform="translate(145.6,402.5) rotate(6.92) scale(0.94,1)" text-anchor="end"><tspan x="0" y="3.4">Inclusion of</tspan><tspan x="0" y="10.7">Traditional Ecological Knowledge in Project Design</tspan></text>
<text transform="translate(148.7,382.8) rotate(10.88) scale(0.94,1)" text-anchor="end"><tspan x="0" y="3.4">Number of School</tspan><tspan x="0" y="10.7">Groups Involved in The Project</tspan></text>
<text transform="translate(153.1,363.5) rotate(14.84) scale(0.94,1)" text-anchor="end"><tspan x="0" y="3.4">Number of Citizen</tspan><tspan x="0" y="10.7">Groups Involved in The Project</tspan></text>
<text transform="translate(158.9,344.4) rotate(18.79) scale(0.94,1)" text-anchor="end"><tspan x="0" y="3.4">Community Pride</tspan></text>
<text transform="translate(165.9,325.8) rotate(22.75) scale(0.94,1)" text-anchor="end"><tspan x="0" y="3.4">Community Sense Of</tspan><tspan x="0" y="10.7">Place</tspan></text>
<text transform="translate(174.2,307.8) rotate(26.70) scale(0.94,1)" text-anchor="end"><tspan x="0" y="3.4">Insurance Premium</tspan><tspan x="0" y="10.7">Reduction</tspan></text>
<text transform="translate(183.8,290.3) rotate(30.66) scale(0.94,1)" text-anchor="end"><tspan x="0" y="3.4">Community-wide</tspan><tspan x="0" y="10.7">Insurance Discounts</tspan></text>
<text transform="translate(194.5,273.6) rotate(34.62) scale(0.94,1)" text-anchor="end"><tspan x="0" y="3.4">Number and Value of</tspan><tspan x="0" y="10.7">New Risk Finance Products Created</tspan></text>
<text transform="translate(206.3,257.6) rotate(38.57) scale(0.94,1)" text-anchor="end"><tspan x="0" y="3.4">Land Value Change</tspan></text>
<text transform="translate(219.3,242.5) rotate(42.53) scale(0.94,1)" text-anchor="end"><tspan x="0" y="3.4">Increase in Local</tspan><tspan x="0" y="10.7">Government Tax Base</tspan></text>
<text transform="translate(233.2,228.3) rotate(46.48) scale(0.94,1)" text-anchor="end"><tspan x="0" y="3.4">Damage Cost Reduction</tspan><tspan x="0" y="10.7">for Energy Facilities</tspan></text>
<text transform="translate(248.1,215.2) rotate(50.44) scale(0.94,1)" text-anchor="end"><tspan x="0" y="3.4">Mitigation of Energy</tspan><tspan x="0" y="10.7">Service Disruption Opportunity Costs</tspan></text>
<text transform="translate(263.8,203.0) rotate(54.40) scale(0.94,1)" text-anchor="end"><tspan x="0" y="3.4">Dune Height</tspan></text>
<text transform="translate(280.4,192.0) rotate(58.35) scale(0.94,1)" text-anchor="end"><tspan x="0" y="3.4">Barrier Island Area</tspan><tspan x="0" y="10.7">and Geometry</tspan></text>
<text transform="translate(297.7,182.2) rotate(62.31) scale(0.94,1)" text-anchor="end"><tspan x="0" y="3.4">Nearshore Bathymetry</tspan><tspan x="0" y="10.7">Change</tspan></text>
<text transform="translate(315.6,173.6) rotate(66.26) scale(0.94,1)" text-anchor="end"><tspan x="0" y="3.4">Geomorphic Ability</tspan></text>
<text transform="translate(334.0,166.2) rotate(70.22) scale(0.94,1)" text-anchor="end"><tspan x="0" y="3.4">Rate of Elevation</tspan><tspan x="0" y="10.7">vs Sea Level</tspan></text>
<text transform="translate(353.0,160.1) rotate(74.18) scale(0.94,1)" text-anchor="end"><tspan x="0" y="3.4">Grey Infrastructure</tspan><tspan x="0" y="10.7">Replacement Cost</tspan></text>
<text transform="translate(372.3,155.4) rotate(78.13) scale(0.94,1)" text-anchor="end"><tspan x="0" y="3.4">Avoided Cooling</tspan><tspan x="0" y="10.7">Energy Cost</tspan></text>
<text transform="translate(391.9,151.9) rotate(82.09) scale(0.94,1)" text-anchor="end"><tspan x="0" y="3.4">Reduced Heating</tspan><tspan x="0" y="10.7">Costs</tspan></text>
<text transform="translate(411.6,149.9) rotate(86.04) scale(0.94,1)" text-anchor="end"><tspan x="0" y="3.4">Energy Savings</tspan><tspan x="0" y="10.7">Estimate</tspan></text>
</g>
<g fill="#ececec" stroke="#ececec" stroke-width="0.07" font-family="Liberation Sans, sans-serif" font-size="6.6" text-anchor="middle">
<text transform="translate(431.5,238.3) scale(0.95,1)">Biodiversity and habitat quality</text>
<text transform="translate(478.3,244.5) scale(0.95,1)">Fisheries and marine life</text>
<text transform="translate(522.0,262.5) scale(0.95,1)">Bird and wildlife habitat</text>
<text transform="translate(559.5,291.3) scale(0.95,1)">Nutrient cycling and Water quality</text>
<text transform="translate(588.3,328.8) scale(0.95,1)">Microbial processes and soil health</text>
<text transform="translate(606.3,372.5) scale(0.95,1)">Carbon sequestration and storage</text>
<text transform="translate(612.5,419.3) scale(0.95,1)">Shoreline accretion</text>
<text transform="translate(606.3,461.0) scale(0.95,1)">Vegetation-based sediment</text>
<text transform="translate(606.3,469.0) scale(0.95,1)">stabilization</text>
<text transform="translate(588.3,509.8) scale(0.95,1)">Wave attenuation</text>
<text transform="translate(559.5,547.3) scale(0.95,1)">Storm surge and flood reduction</text>
<text transform="translate(522.0,571.0) scale(0.95,1)">Reduced erosion</text>
<text transform="translate(522.0,579.0) scale(0.95,1)">and damage during storms</text>
<text transform="translate(478.3,589.0) scale(0.95,1)">Risk to life</text>
<text transform="translate(478.3,597.0) scale(0.95,1)">and property vulnerability reduction</text>
<text transform="translate(431.5,600.3) scale(0.95,1)">Aesthetics and natural beauty</text>
<text transform="translate(384.7,594.1) scale(0.95,1)">Recreational use and tourism</text>
<text transform="translate(341.0,576.1) scale(0.95,1)">Economic livelihoods</text>
<text transform="translate(303.5,547.3) scale(0.95,1)">Public health and wellbeing</text>
<text transform="translate(274.7,509.8) scale(0.95,1)">Cultural heritage and identity</text>
<text transform="translate(256.7,466.1) scale(0.95,1)">Education and inspiration</text>
<text transform="translate(250.5,419.3) scale(0.95,1)">Insurance and risk finance</text>
<text transform="translate(256.7,372.5) scale(0.95,1)">Property and land value increases</text>
<text transform="translate(274.7,328.8) scale(0.95,1)">Energy infrastructure protection</text>
<text transform="translate(303.5,291.3) scale(0.95,1)">Beneficial geomorphological change</text>
<text transform="translate(341.0,262.5) scale(0.95,1)">Dynamic protection and adaptation</text>
<text transform="translate(384.7,244.5) scale(0.95,1)">Reduction in energy consumption</text>
<text transform="translate(431.5,313.4) scale(0.95,1)">Ecological</text>
<text transform="translate(431.5,321.4) scale(0.95,1)">and Environmental Impacts</text>
<text transform="translate(528.5,383.9) scale(0.95,1)">Coastal Land Loss</text>
<text transform="translate(528.5,391.9) scale(0.95,1)">and Shoreline Stability</text>
<text transform="translate(491.5,497.9) scale(0.95,1)">Coastal Hazard Risk Reduction</text>
<text transform="translate(491.5,505.9) scale(0.95,1)">and Resilience</text>
<text transform="translate(371.5,505.9) scale(0.95,1)">Socio-Economic and Cultural Impacts</text>
<text transform="translate(334.5,383.9) scale(0.95,1)">Economic, Financial,</text>
<text transform="translate(334.5,391.9) scale(0.95,1)">and Energy Considerations</text>
<text x="431.5" y="404.2">MARSH</text>
</g>
<defs><clipPath id="cimg"><circle cx="431.5" cy="437.2" r="25"/></clipPath><linearGradient id="grass" x1="0" y1="0" x2="0" y2="1"><stop offset="0" stop-color="#6f8f5a"/><stop offset="0.5" stop-color="#5d8f3c"/><stop offset="1" stop-color="#4a7a30"/></linearGradient></defs>
<g clip-path="url(#cimg)">
<rect x="404.5" y="410.2" width="54" height="54" fill="#2b2b2b"/>
<rect x="404.5" y="426.7" width="54" height="4.5" fill="#dfe8ec"/>
<rect x="404.5" y="431.2" width="54" height="6.5" fill="#4f7538"/>
<rect x="404.5" y="437.5" width="54" height="10" fill="#6f9a3e"/>
<path d="M404.5,441.2 q4,-1 6,-5 l-8,0z" fill="#3e5a30"/>
<path d="M404.5,438.7 l6,0 q-2,4 0,9 l-6,0z" fill="#c8d0d0"/>
<path d="M437.5,434.7 q8,-2 16,0 l0,1.5 q-8,-1 -16,0z" fill="#b8c4c0"/>
</g>
<circle cx="431.5" cy="437.2" r="25.5" fill="none" stroke="#eee" stroke-width="1.7"/>
</svg></div><div style="position:absolute;left:841px;top:0;width:352px;height:582px;background:#1b1b1b"></div></div>
<svg class="a" style="left:437px;top:507px" width="9" height="13" viewBox="0 0 9 13"><path d="M.6 .6v10.2l2.5-2.3 1.7 3.8 1.6-.7-1.7-3.7h3.4z" fill="#fff" stroke="#111" stroke-width=".8"/></svg>
<div class="a" style="left:27px;top:161.7px;width:104px;height:29.3px;border-radius:15px;background:#1e1e1e;border:1px solid #3c3c3c"></div>
<svg class="a" style="left:42.5px;top:172px" width="13" height="9" viewBox="0 0 13 9"><path d="M12.5 4.5H1.2M4.8 .8L1 4.5l3.8 3.7" fill="none" stroke="#f0f0f0" stroke-width="1.2"/></svg>
<div class="t " style="left:60.50px;top:170.22px;font-size:12.50px;color:#f0f0f0;transform:scaleX(0.8595);transform-origin:0 0;">Reset View</div>
<div class="a" style="left:357px;top:162px;width:150px;height:32.4px;border-radius:16.2px;background:rgba(45,45,45,.38);border:1px solid rgba(90,90,90,.5)"></div>
<div class="t " style="left:375.60px;top:171.58px;font-size:11.48px;color:#f0f0f0;transform:scaleX(0.9273);transform-origin:0 0;">Overview</div>
<div class="a" style="left:435.6px;top:166px;width:68.2px;height:24.6px;border-radius:12.3px;background:rgba(56,126,216,.84)"></div>
<div class="t " style="left:451.90px;top:171.58px;font-size:11.48px;color:#f4f4f4;transform:scaleX(0.9300);transform-origin:0 0;">Explore</div>
<div class="a" style="left:753.3px;top:161.7px;width:83.4px;height:29.1px;border-radius:14.6px;background:#1e1e1e;border:1px solid #3c3c3c"></div>
<div class="t " style="left:769.60px;top:170.52px;font-size:11.19px;color:#f0f0f0;transform:scaleX(0.9567);transform-origin:0 0;">History</div>
<svg class="a" style="left:810.8px;top:172.5px" width="8.2" height="7.5" viewBox="0 0 8.2 7.5"><path d="M0 0h8.2L4.1 7.5z" fill="#f4f4f4"/></svg>
<div class="a" style="left:852px;top:238.5px;width:352px;height:1px;background:#2c2c2c"></div>
<div class="t " style="left:868.40px;top:163.41px;font-size:10.03px;color:#3f7fdb;transform:scaleX(0.9336);transform-origin:0 0;">Home</div>
<div class="t " style="left:899.50px;top:165.13px;font-size:8.00px;color:#666;">&rsaquo;</div>
<div class="t " style="left:909.00px;top:163.41px;font-size:10.03px;color:#ffffff;font-weight:bold;transform:scaleX(0.8706);transform-origin:0 0;">MARSH</div>
<div class="t " style="left:869.00px;top:184.62px;font-size:18.17px;color:#ffffff;font-weight:bold;transform:scaleX(0.8785);transform-origin:0 0;">MARSH</div>
<div class="t " style="left:868.50px;top:212.90px;font-size:9.45px;color:#8c8c8c;transform:scaleX(0.9746);transform-origin:0 0;">Nature-Based Solution Type</div>
<div class="t " style="left:868.50px;top:257.98px;font-size:12.72px;color:#f4f4f4;font-weight:bold;transform:scaleX(0.9365);transform-origin:0 0;">Overview</div>
<div class="a" style="left:868.5px;top:279px;width:319px;height:1px;background:#2e2e2e"></div>
<div class="t " style="left:868.50px;top:295.92px;font-size:13.08px;color:#d8d8d8;transform:scaleX(0.9364);transform-origin:0 0;">5 service categories with 24 parameters</div>
<div class="t " style="left:868.50px;top:337.43px;font-size:13.37px;color:#f4f4f4;font-weight:bold;transform:scaleX(0.8637);transform-origin:0 0;">Service Categories</div>
<div class="a" style="left:868.5px;top:359.2px;width:319px;height:1px;background:#2e2e2e"></div>
<div class="t " style="left:868.70px;top:383.52px;font-size:11.19px;color:#e6e6e6;transform:scaleX(0.9570);transform-origin:0 0;">Ecological and Environmental Impacts</div>
<div class="a" style="left:868.5px;top:409.0px;width:319px;height:1px;background:#272727"></div>
<div class="t " style="left:868.70px;top:421.62px;font-size:11.19px;color:#e6e6e6;transform:scaleX(0.9413);transform-origin:0 0;">Coastal Land Loss and Shoreline Stability</div>
<div class="a" style="left:868.5px;top:447.1px;width:319px;height:1px;background:#272727"></div>
<div class="t " style="left:868.70px;top:459.72px;font-size:11.19px;color:#e6e6e6;transform:scaleX(0.9334);transform-origin:0 0;">Coastal Hazard Risk Reduction and Resilience</div>
<div class="a" style="left:868.5px;top:485.2px;width:319px;height:1px;background:#272727"></div>
<div class="t " style="left:868.70px;top:497.82px;font-size:11.19px;color:#e6e6e6;transform:scaleX(0.9602);transform-origin:0 0;">Socio-Economic and Cultural Impacts</div>
<div class="a" style="left:868.5px;top:523.3px;width:319px;height:1px;background:#272727"></div>
<div class="t " style="left:868.70px;top:535.92px;font-size:11.19px;color:#e6e6e6;transform:scaleX(0.9407);transform-origin:0 0;">Economic, Financial, and Energy Considerations</div>
<div class="a" style="left:868.5px;top:561.4px;width:319px;height:1px;background:#272727"></div>
<div class="a" style="left:8px;top:727.5px;width:1198px;height:4px;background:#3a3a3a"></div>
<div class="a" style="left:8px;top:731px;width:1196px;height:30px;background:linear-gradient(90deg,#1c1e22 0%,#1b1d21 50%,#1d2229 75%,#1c1d21 100%)"></div>
<div class="a" style="left:1203px;top:90px;width:3px;height:671px;background:#3a3a3a"></div>
<div class="a" style="left:8px;top:731px;width:38px;height:30px;background:#202226"></div>
<svg class="a" style="left:19px;top:740px" width="15" height="15" viewBox="0 0 15 15"><path d="M0 2l6.3-.9V7H0zM7 1l8-1.1V7H7zM0 7.8h6.3v6L0 13zM7 7.8h8V15l-8-1.1z" fill="#5a5a5a"/></svg>
<div class="a" style="left:45.7px;top:731.5px;width:224px;height:29.5px;background:#323233;border-top:1px solid #474748"></div>
<svg class="a" style="left:55px;top:739px" width="14" height="14" viewBox="0 0 14 14"><circle cx="8.3" cy="5.7" r="4.3" fill="none" stroke="#999" stroke-width="1.2"/><path d="M5.2 8.8L1 13" stroke="#999" stroke-width="1.3"/></svg>
<div class="t " style="left:81.70px;top:742.35px;font-size:12.94px;color:#cfcfcf;transform:scaleX(0.8771);transform-origin:0 0;">Type here to search</div>
<svg class="a" style="left:214px;top:737.5px" width="48" height="19" viewBox="0 0 48 19"><path d="M17 1l2.6 6.4L26 10l-6.4 2.6L17 19l-2.6-6.4L8 10l6.4-2.6z" fill="#f7b42c"/><path d="M34.5 7.5l1.3 3.2 3.2 1.3-3.2 1.3-1.3 3.2-1.3-3.2-3.2-1.3 3.2-1.3z" fill="#f9c440"/><circle cx="29" cy="1.8" r="1.5" fill="#f26b2c"/><path d="M3 12.5l.9 2.1 2.1.9-2.1.9L3 18.5l-.9-2.1-2.1-.9 2.1-.9z" fill="#2b9ef5"/><circle cx="46" cy="16.5" r="1.3" fill="#74c54b"/></svg>
<svg class="a" style="left:282.5px;top:740px" width="14" height="14" viewBox="0 0 14 14"><g fill="none" stroke="#c8c8c8" stroke-width="1.2"><rect x="2.5" y="3" width="6.5" height="8"/><path d="M0 1.2h11.5M0 12.8h11.5M13 2.5v3M13 8.5v3"/></g></svg>
<svg class="a" style="left:320px;top:740px" width="18" height="15" viewBox="0 0 18 15"><path d="M.5 1.5h6l2 2h9v11H.5z" fill="#e8a82a"/><rect x=".5" y="5" width="17" height="9.5" rx="1" fill="#fccf52"/><rect x="4.5" y="8.5" width="9" height="6" fill="#2b8cd8"/></svg>
<svg class="a" style="left:358.5px;top:738.5px" width="19" height="18" viewBox="0 0 19 18"><path d="M6 4.5V3a3.5 3.5 0 0 1 7 0v1.5" fill="none" stroke="#39a2e8" stroke-width="1.4"/><rect x=".5" y="4.5" width="18" height="13" rx="2.5" fill="#f2f2f2"/><rect x="5.8" y="7.5" width="3.4" height="3.4" fill="#f25022"/><rect x="9.8" y="7.5" width="3.4" height="3.4" fill="#7fba00"/><rect x="5.8" y="11.5" width="3.4" height="3.4" fill="#00a4ef"/><rect x="9.8" y="11.5" width="3.4" height="3.4" fill="#ffb900"/></svg>
<svg class="a" style="left:396.5px;top:739px" width="20" height="17" viewBox="0 0 20 17"><rect x="6" y="1" width="13.5" height="13" rx="1.5" fill="#2aa0f0"/><path d="M6.5 7.5l13 -3.5v11.5H6.5z" fill="#0c6fd0"/><rect x=".5" y="3.5" width="11" height="11" rx="1.5" fill="#0f78d4"/><ellipse cx="6" cy="9" rx="2.6" ry="3" fill="none" stroke="#fff" stroke-width="1.4"/></svg>
<svg class="a" style="left:438px;top:738.5px" width="14" height="18" viewBox="0 0 14 18"><path d="M7 .5c4 0 6.5 3.3 6.5 7.3 0 4.4-3.3 9.7-6.5 9.7S.5 12.2.5 7.8C.5 3.8 3 .5 7 .5z" fill="#f2f2f2"/><path d="M2.6 8.2l3.3 1.9.3 2.5-2.7-1.4zM11.4 8.2l-3.3 1.9-.3 2.5 2.7-1.4z" fill="#1a1a1a"/></svg>
<div class="a" style="left:465.3px;top:731px;width:36.7px;height:30px;background:#3c3d41"></div>
<svg class="a" style="left:473.3px;top:737px" width="21" height="21" viewBox="0 0 21 21"><defs><linearGradient id="edg" x1="0" y1="0" x2="1" y2="1"><stop offset="0" stop-color="#5fe08a"/><stop offset=".45" stop-color="#1aa7d8"/><stop offset="1" stop-color="#0d5fc0"/></linearGradient></defs><circle cx="10.5" cy="10" r="9.5" fill="url(#edg)"/><path d="M4 13c0-4 3-6.5 6.5-6.5 3 0 5 2 5 4.2 0 1.5-1 2.3-2.3 2.3H8.5c0 2.5 2.2 4.3 5.2 4.3" fill="#0b4ea8"/><circle cx="6.5" cy="15" r="4" fill="#c8c8c8" stroke="#3c3d41" stroke-width="1"/><circle cx="6.5" cy="13.8" r="1.4" fill="#888"/></svg>
<svg class="a" style="left:513px;top:739px" width="19" height="17" viewBox="0 0 19 17"><rect x="6" y=".5" width="12.5" height="16" rx="1.2" fill="#e6eef9"/><path d="M8.5 4h8M8.5 7h8M8.5 10h8M8.5 13h8" stroke="#7a96c8" stroke-width="1"/><rect x=".5" y="2.5" width="10.5" height="12" rx="1.2" fill="#1a5cbf"/><path d="M2.3 5.5l1.6 6 1.7-4.5 1.7 4.5 1.6-6" fill="none" stroke="#fff" stroke-width="1.1"/></svg>
<div class="a" style="left:551.3px;top:737.5px;width:19.3px;height:19.3px;border-radius:50%;background:linear-gradient(135deg,#1fc4d6 0%,#4c6ef5 55%,#7c3cf0 100%);font-size:5.5px;color:#fff;text-align:center;line-height:19.3px;font-style:italic;font-family:Liberation Serif,serif">Canva</div>
<div class="a" style="left:590.5px;top:738px;width:17px;height:17px;border-radius:4px;background:#161616"><svg width="17" height="17" viewBox="0 0 17 17"><path d="M8.5 3l5 2.5v6l-5 2.5-5-2.5v-6z" fill="#bbb"/><path d="M8.5 8.5l5-3M8.5 8.5v5.5M8.5 8.5l-5-3" stroke="#444" stroke-width=".8"/></svg></div>
<div class="a" style="left:619.4px;top:731px;width:37.3px;height:30px;background:#b96c2c"></div>
<svg class="a" style="left:626px;top:736px" width="29" height="23" viewBox="0 0 29 23"><circle cx="16" cy="3.5" r="2.6" fill="#8a90ee"/><circle cx="9.5" cy="3.2" r="3" fill="#7a80ea"/><path d="M12 6.5h6a1.6 1.6 0 0 1 1.6 1.6V12a4 4 0 0 1-4 4H12z" fill="#7b83eb"/><rect x="4" y="6" width="10" height="11" rx="2.5" fill="#5b62d6"/><rect x="1" y="8" width="8" height="8" rx="1.3" fill="#4650c0"/><path d="M3 10.3h4M5 10.3v4" stroke="#fff" stroke-width="1.1"/><circle cx="22" cy="16" r="6.3" fill="#d42a2a"/><text x="22" y="19.6" font-size="9.5" fill="#fff" text-anchor="middle" font-family="Liberation Sans">1</text></svg>
<svg class="a" style="left:869px;top:735.5px" width="20" height="21" viewBox="0 0 20 21"><circle cx="8.5" cy="11.5" r="8" fill="#f59a2a"/><path d="M6.5 18.5a3.6 3.6 0 0 1 .4-7.2 4.6 4.6 0 0 1 8.6 1.2 3 3 0 0 1 .5 6z" fill="#bcd8f2"/><circle cx="13.5" cy="5" r="4.5" fill="#d42a2a"/><text x="13.5" y="7.6" font-size="6.8" fill="#fff" text-anchor="middle" font-family="Liberation Sans">1</text></svg>
<div class="t " style="left:893.60px;top:741.22px;font-size:12.50px;color:#e8e8e8;transform:scaleX(0.7944);transform-origin:0 0;">66&deg;F</div>
<div class="t " style="left:921.30px;top:741.22px;font-size:12.50px;color:#e8e8e8;transform:scaleX(0.8665);transform-origin:0 0;">Mostly sunny</div>
<svg class="a" style="left:1004.5px;top:743.5px" width="10" height="6" viewBox="0 0 10 6"><path d="M.5 5.5L5 1l4.5 4.5" fill="none" stroke="#ddd" stroke-width="1.1"/></svg>
<svg class="a" style="left:1021.5px;top:741px" width="14" height="12" viewBox="0 0 14 12"><rect x="3" y="3.5" width="9.5" height="6.5" rx=".8" fill="none" stroke="#ddd" stroke-width="1.1"/><path d="M12.5 5.5h1v2.5h-1M.5 1.2l3.5 2.6" stroke="#ddd" stroke-width="1.1" fill="none"/></svg>
<svg class="a" style="left:1042px;top:740px" width="9" height="16" viewBox="0 0 9 16"><rect x="2" y=".5" width="5" height="10" rx="2.5" fill="#e8e8e8"/><path d="M.7 8a3.8 3.8 0 0 0 7.6 0M4.5 12v3.5" stroke="#ddd" fill="none" stroke-width="1"/></svg>
<svg class="a" style="left:1058.5px;top:742px" width="14" height="10" viewBox="0 0 14 10"><path d="M3.3 9.5a3 3 0 0 1-.3-6A4.3 4.3 0 0 1 11 3.8a2.8 2.8 0 0 1 .5 5.7z" fill="#2a8ef2"/></svg>
<svg class="a" style="left:1080px;top:742px" width="11" height="11" viewBox="0 0 11 11"><path d="M1 10.5A9.5 9.5 0 0 1 10.5 1M3.5 10.5a7 7 0 0 1 7-7M6 10.5a4.5 4.5 0 0 1 4.5-4.5" fill="none" stroke="#aaa" stroke-width="1"/><circle cx="9.5" cy="9.5" r="1.2" fill="#ddd"/></svg>
<svg class="a" style="left:1096px;top:741px" width="13" height="13" viewBox="0 0 13 13"><path d="M.6 4.5h2.6l3.6-3.2v10.4L3.2 8.5H.6z" fill="none" stroke="#ddd" stroke-width="1.05"/><path d="M8.8 4.2a3.2 3.2 0 0 1 0 4.6M10.6 2.4a5.8 5.8 0 0 1 0 8.2" fill="none" stroke="#ddd" stroke-width="1.05"/></svg>
<div class="t " style="left:1119.80px;top:735.63px;font-size:9.88px;color:#ececec;transform:scaleX(0.8865);transform-origin:0 0;">12:14 PM</div>
<div class="t " style="left:1115.40px;top:749.93px;font-size:9.88px;color:#ececec;transform:scaleX(0.9584);transform-origin:0 0;">11/26/2025</div>
<svg class="a" style="left:1173.5px;top:741.5px" width="14" height="13" viewBox="0 0 14 13"><path d="M.6 .6h12.8v9H8.5l-2.5 2.6V9.6H.6z" fill="#e8e8e8"/><path d="M3 3.3h8M3 5.8h6" stroke="#333" stroke-width="1"/><circle cx="11" cy="10" r="2.3" fill="#1c1d21" stroke="#ddd" stroke-width=".8"/></svg>
<div class="a" style="left:399.3px;top:90px;width:180px;height:26px;border-radius:5px;background:#fff;box-shadow:0 1px 4px rgba(0,0,0,.25)"></div>
<svg class="a" style="left:421.3px;top:85.5px" width="14" height="6" viewBox="0 0 14 6"><path d="M0 6L7 0l7 6z" fill="#fff"/></svg>
<div class="t " style="left:411.00px;top:95.85px;font-size:11.63px;color:#242424;transform:scaleX(0.9694);transform-origin:0 0;">Take control of the presentation</div>
<div class="a" style="left:11.7px;top:731.8px;width:134.6px;height:22px;border-radius:4px;background:rgba(24,24,26,.6)"></div>
<div class="t " style="left:17.10px;top:736.71px;font-size:11.92px;color:#ffffff;transform:scaleX(0.9261);transform-origin:0 0;">Rahim, Md Adilur (Guest)</div>
<div class="tile" style="left:1214.6px;top:115.5px;width:221px;height:122px;border:2.6px solid #5b5fc7;border-radius:5px;background:#e8eaec"><svg width="222" height="123" viewBox="0 0 222 123" style="position:absolute;left:-2.6px;top:-2.6px"><defs><filter id="bl1"><feGaussianBlur stdDeviation="1.2"/></filter><filter id="bl2"><feGaussianBlur stdDeviation="0.6"/></filter><linearGradient id="spbg" x1="0" y1="0" x2="1" y2="0"><stop offset="0" stop-color="#dfe2e4"/><stop offset=".45" stop-color="#eaeced"/><stop offset=".7" stop-color="#eceeef"/><stop offset="1" stop-color="#dde1e3"/></linearGradient></defs><rect width="222" height="123" fill="url(#spbg)"/><rect x="62" y="66" width="86" height="30" rx="12" fill="#2f2f2f" filter="url(#bl1)"/><path d="M18,125 C28,96 60,84 100,84 C140,84 162,96 172,125 Z" fill="#1d3436"/><ellipse cx="101" cy="50" rx="24.5" ry="17" fill="#2a2220"/><ellipse cx="100.5" cy="58" rx="21.5" ry="22" fill="#b4866a"/><path d="M77,58 C76,78 82,99 101,100 C120,99 126,78 124,58 C121,66 118,70 114,72 C108,69 93,69 87,72 C83,70 80,66 77,58 Z" fill="#251d1b"/><path d="M89,73 C95,70 106,70 112,73 C106,75 95,75 89,73Z" fill="#3a2622"/><path d="M87,50 q5,-3 9,0 M105,50 q5,-3 9,0" stroke="#2a1e1a" stroke-width="1.6" fill="none"/><ellipse cx="91.5" cy="54" rx="2.5" ry="1.3" fill="#3a2a24"/><ellipse cx="109.5" cy="54" rx="2.5" ry="1.3" fill="#3a2a24"/><path d="M100,54 l-3,11 q3,2 6,0z" fill="#a67a60"/><path d="M79,40 C78,23 90,17.5 100,17.5 C111,17.5 122,23 121,40 C110,36 90,36 79,40Z" fill="#ebe8e3"/><g filter="url(#bl2)"><path d="M132,122 C128,108 130,94 140,88 C150,84 164,86 170,96 C174,104 172,116 166,122Z" fill="#cfa994"/><path d="M137,92 q14,-7 30,0" stroke="#b8907a" stroke-width="1" fill="none"/></g></svg></div>
<div class="a" style="left:1221.7px;top:208.5px;width:160px;height:22.5px;border-radius:4px;background:rgba(50,50,50,.72)"></div>
<div class="t " style="left:1226.80px;top:213.02px;font-size:12.50px;color:#ffffff;transform:scaleX(0.8852);transform-origin:0 0;">Rahim, Md Adilur (Guest)</div>
<svg class="a" style="left:1361.5px;top:214.5px" width="14" height="12" viewBox="0 0 14 12"><rect x=".6" y=".6" width="11" height="8.5" rx="1" fill="none" stroke="#fff" stroke-width="1.1"/><rect x="2.6" y="2.6" width="4.5" height="3.5" fill="#fff"/><circle cx="10.5" cy="8.8" r="3" fill="#fff"/><circle cx="10.5" cy="8.8" r="1.2" fill="#555"/></svg>
<div class="tile" style="left:1214.6px;top:241.6px;width:108.4px;height:80.2px;background:linear-gradient(135deg,#f3ecf3 0%,#f6f2ee 60%,#f4f0e6 100%);border:1px solid #e2e2e2"></div>
<div class="a" style="left:1245.8px;top:258.6px;width:45.5px;height:45.5px;border-radius:50%;background:#cddcec;box-shadow:0 1px 3px rgba(0,0,0,.12)"></div><div class="t " style="left:1258.00px;top:273.65px;font-size:16.72px;color:#26416a;transform:scaleX(0.8901);transform-origin:0 0;-webkit-text-stroke:.45px #26416a;">RR</div>
<div class="mute" style="left:1217.8px;top:295.8px;width:26.0px;height:22.5px"><svg width="26" height="22" viewBox="0 0 26 22"><rect x="10.8" y="4.5" width="4.4" height="8.5" rx="2.2" fill="#f4f4f4"/><path d="M8.3 10.5a4.7 4.7 0 0 0 9.4 0M13 15.3v2.6" fill="none" stroke="#f4f4f4" stroke-width="1"/><path d="M7.5 4.3l11.5 13.5" stroke="#646464" stroke-width="2.2"/><path d="M7.5 4.3l11.5 13.5" stroke="#f4f4f4" stroke-width="1"/></svg></div>
<div class="tile" style="left:1326.3px;top:241.6px;width:109.1px;height:80.2px"><svg width="110" height="81" viewBox="0 0 110 81" style="position:absolute;left:0;top:0"><defs><filter id="hb"><feGaussianBlur stdDeviation=".7"/></filter></defs><rect width="110" height="81" fill="#c9bcac"/><rect x="70" width="40" height="81" fill="#d2c6b8"/><g filter="url(#hb)"><rect x="0" y="0" width="30" height="44" fill="#ece9e4"/><rect x="0" y="8" width="24" height="2" fill="#c8ccd4"/><rect x="0" y="18" width="24" height="2" fill="#9aa8c0"/><rect x="24" y="0" width="6" height="46" fill="#d4d0ca"/><rect x="0" y="40" width="36" height="6" fill="#dedad4"/><rect x="30" y="38" width="12" height="8" rx="2" fill="#e6e2dc"/><rect x="20" y="45" width="12" height="18" rx="3" fill="#2e3c64"/><path d="M10,81 C12,60 22,48 40,46 L78,46 C88,50 94,60 94,81 Z" fill="#7b9fd6"/><path d="M46,44 C44,24 52,15 63,15 C75,15 81,22 80,36 L78,42 C72,44 56,46 46,44Z" fill="#222630"/><path d="M54,34 C54,28 60,27 68,27 C76,27 80,30 80,36 C80,46 76,54 67,54 C58,54 54,46 54,34Z" fill="#9d735e"/><circle cx="62" cy="38.5" r="4" fill="none" stroke="#151515" stroke-width="1.5"/><circle cx="74" cy="38.5" r="4" fill="none" stroke="#151515" stroke-width="1.5"/><path d="M47,38 C46,44 48,48 51,48" stroke="#1a1a1a" stroke-width="3" fill="none"/><path d="M81,40 l1,10" stroke="#222" stroke-width="1.2"/><path d="M60,56 C62,48 70,47 75,50 C80,54 84,62 88,72 L90,81 L76,81 C72,72 64,66 60,56Z" fill="#c9a592"/><path d="M44,46 L36,81" stroke="#23334a" stroke-width="1.3"/></g></svg></div>
<div class="mute" style="left:1330.0px;top:295.8px;width:26.0px;height:22.5px"><svg width="26" height="22" viewBox="0 0 26 22"><rect x="10.8" y="4.5" width="4.4" height="8.5" rx="2.2" fill="#f4f4f4"/><path d="M8.3 10.5a4.7 4.7 0 0 0 9.4 0M13 15.3v2.6" fill="none" stroke="#f4f4f4" stroke-width="1"/><path d="M7.5 4.3l11.5 13.5" stroke="#646464" stroke-width="2.2"/><path d="M7.5 4.3l11.5 13.5" stroke="#f4f4f4" stroke-width="1"/></svg></div>
<div class="tile" style="left:1214.2px;top:325.5px;width:109px;height:81.5px"><svg width="110" height="82" viewBox="0 0 110 82" style="position:absolute;left:0;top:0"><defs><filter id="wb"><feGaussianBlur stdDeviation="1.6"/></filter><filter id="wb2"><feGaussianBlur stdDeviation=".6"/></filter><linearGradient id="wbg" x1="0" y1="0" x2="0" y2="1"><stop offset="0" stop-color="#b4b4b4"/><stop offset=".3" stop-color="#c6c6c6"/><stop offset=".6" stop-color="#cdcdcd"/><stop offset="1" stop-color="#c4c4c4"/></linearGradient></defs><rect width="110" height="82" fill="url(#wbg)"/><g filter="url(#wb)"><path d="M5,0 L35,28" stroke="#d8d8d8" stroke-width="3"/><rect x="0" y="12" width="110" height="4" fill="#dadada"/><rect x="0" y="30" width="110" height="3" fill="#d6d6d6"/><rect x="0" y="44" width="110" height="3" fill="#dcdcdc"/><rect x="0" y="57" width="110" height="3" fill="#d2d2d2"/><rect x="95" y="20" width="6" height="62" fill="#b0b0b0"/></g><g filter="url(#wb2)"><path d="M18,82 C20,72 30,68 44,68 L80,68 C92,68 100,74 102,82Z" fill="#d2d8e0"/><path d="M40,82 C38,64 42,38 52,34 C58,31 70,31 76,36 C86,42 88,62 98,82Z" fill="#3a2a26"/><path d="M53,48 C53,41 58,39 65,39 C72,39 77,42 77,49 C77,60 73,68 65,68 C57,68 53,60 53,48Z" fill="#bb8e7a"/><circle cx="59.5" cy="53" r="4.2" fill="none" stroke="#4a3836" stroke-width="1.1"/><circle cx="70.5" cy="53" r="4.2" fill="none" stroke="#4a3836" stroke-width="1.1"/><path d="M66,80 C66,70 68,62 72,56 C76,54 80,58 80,64 L80,82Z" fill="#c89c88"/></g></svg></div>
<div class="mute" style="left:1218.0px;top:381.0px;width:26.0px;height:22.5px"><svg width="26" height="22" viewBox="0 0 26 22"><rect x="10.8" y="4.5" width="4.4" height="8.5" rx="2.2" fill="#f4f4f4"/><path d="M8.3 10.5a4.7 4.7 0 0 0 9.4 0M13 15.3v2.6" fill="none" stroke="#f4f4f4" stroke-width="1"/><path d="M7.5 4.3l11.5 13.5" stroke="#646464" stroke-width="2.2"/><path d="M7.5 4.3l11.5 13.5" stroke="#f4f4f4" stroke-width="1"/></svg></div>
<div class="mute" style="left:1330.0px;top:381.0px;width:26.0px;height:22.5px"><svg width="26" height="22" viewBox="0 0 26 22"><rect x="10.8" y="4.5" width="4.4" height="8.5" rx="2.2" fill="#f4f4f4"/><path d="M8.3 10.5a4.7 4.7 0 0 0 9.4 0M13 15.3v2.6" fill="none" stroke="#f4f4f4" stroke-width="1"/><path d="M7.5 4.3l11.5 13.5" stroke="#646464" stroke-width="2.2"/><path d="M7.5 4.3l11.5 13.5" stroke="#f4f4f4" stroke-width="1"/></svg></div>
<div class="tile" style="left:1214.6px;top:410.6px;width:108.4px;height:80.0px;background:linear-gradient(135deg,#e4f2ee 0%,#eef0e6 55%,#f2ece6 100%);border:1px solid #e2e2e2"></div>
<div class="a" style="left:1245.8px;top:428.2px;width:45.5px;height:45.5px;border-radius:50%;background:#d2e2ea;box-shadow:0 1px 3px rgba(0,0,0,.12)"></div><div class="t " style="left:1257.50px;top:442.75px;font-size:16.72px;color:#1d4a4e;transform:scaleX(0.9108);transform-origin:0 0;-webkit-text-stroke:.45px #1d4a4e;">KG</div>
<div class="mute" style="left:1218.0px;top:465.0px;width:26.0px;height:22.5px"><svg width="26" height="22" viewBox="0 0 26 22"><rect x="10.8" y="4.5" width="4.4" height="8.5" rx="2.2" fill="#f4f4f4"/><path d="M8.3 10.5a4.7 4.7 0 0 0 9.4 0M13 15.3v2.6" fill="none" stroke="#f4f4f4" stroke-width="1"/><path d="M7.5 4.3l11.5 13.5" stroke="#646464" stroke-width="2.2"/><path d="M7.5 4.3l11.5 13.5" stroke="#f4f4f4" stroke-width="1"/></svg></div>
<div class="tile" style="left:1326.8px;top:410.6px;width:108.6px;height:80.0px;background:linear-gradient(135deg,#f2eef6 0%,#f0eef4 60%,#eeeef4 100%);border:1px solid #e2e2e2"></div>
<div class="a" style="left:1358.3px;top:428.2px;width:45.5px;height:45.5px;border-radius:50%;background:#e6c8ce;box-shadow:0 1px 3px rgba(0,0,0,.12)"></div><div class="t " style="left:1369.40px;top:442.75px;font-size:16.72px;color:#6a1f2a;transform:scaleX(0.9730);transform-origin:0 0;-webkit-text-stroke:.45px #6a1f2a;">AG</div>
<div class="mute" style="left:1330.0px;top:465.0px;width:26.0px;height:22.5px"><svg width="26" height="22" viewBox="0 0 26 22"><rect x="10.8" y="4.5" width="4.4" height="8.5" rx="2.2" fill="#f4f4f4"/><path d="M8.3 10.5a4.7 4.7 0 0 0 9.4 0M13 15.3v2.6" fill="none" stroke="#f4f4f4" stroke-width="1"/><path d="M7.5 4.3l11.5 13.5" stroke="#646464" stroke-width="2.2"/><path d="M7.5 4.3l11.5 13.5" stroke="#f4f4f4" stroke-width="1"/></svg></div>
<div class="tile" style="left:1214.6px;top:494.3px;width:108.4px;height:80.7px;background:linear-gradient(135deg,#e8f2e6 0%,#eef2ea 60%,#f2f0e8 100%);border:1px solid #e2e2e2"></div>
<div class="a" style="left:1245.7px;top:512.6px;width:45.5px;height:45.5px;border-radius:50%;overflow:hidden;background:linear-gradient(180deg,#7eaadc 0%,#a8c8e8 45%,#d0d8d8 62%,#b8b0a0 80%,#a09888 100%)"><div style="position:absolute;left:27px;top:9px;width:11px;height:30px;background:#c9b89a"></div><div style="position:absolute;left:29px;top:5px;width:7px;height:6px;background:#b0a080"></div><div style="position:absolute;left:12px;top:28px;width:19px;height:22px;border-radius:40% 40% 0 0;background:#14182c"></div><div style="position:absolute;left:17px;top:19px;width:9px;height:11px;border-radius:50%;background:#6a4a38"></div><div style="position:absolute;left:14px;top:16px;width:15px;height:4px;background:#111"></div><div style="position:absolute;left:0;top:30px;width:12px;height:10px;background:#7a9a6a;opacity:.7"></div></div>
<div class="mute" style="left:1218.0px;top:549.0px;width:26.0px;height:22.5px"><svg width="26" height="22" viewBox="0 0 26 22"><rect x="10.8" y="4.5" width="4.4" height="8.5" rx="2.2" fill="#f4f4f4"/><path d="M8.3 10.5a4.7 4.7 0 0 0 9.4 0M13 15.3v2.6" fill="none" stroke="#f4f4f4" stroke-width="1"/><path d="M7.5 4.3l11.5 13.5" stroke="#646464" stroke-width="2.2"/><path d="M7.5 4.3l11.5 13.5" stroke="#f4f4f4" stroke-width="1"/></svg></div>
<div class="tile" style="left:1326.8px;top:494.3px;width:108.6px;height:80.7px;background:linear-gradient(135deg,#e2f4f2 0%,#eaf2ee 60%,#eef2ec 100%);border:1px solid #e2e2e2"></div>
<div class="a" style="left:1358.3px;top:512.6px;width:45.5px;height:45.5px;border-radius:50%;background:#f0cdc2;box-shadow:0 1px 3px rgba(0,0,0,.12)"></div><div class="t " style="left:1369.40px;top:527.15px;font-size:16.72px;color:#6a2a1a;transform:scaleX(0.9730);transform-origin:0 0;-webkit-text-stroke:.45px #6a2a1a;">RN</div>
<div class="mute" style="left:1330.0px;top:549.0px;width:26.0px;height:22.5px"><svg width="26" height="22" viewBox="0 0 26 22"><rect x="10.8" y="4.5" width="4.4" height="8.5" rx="2.2" fill="#f4f4f4"/><path d="M8.3 10.5a4.7 4.7 0 0 0 9.4 0M13 15.3v2.6" fill="none" stroke="#f4f4f4" stroke-width="1"/><path d="M7.5 4.3l11.5 13.5" stroke="#646464" stroke-width="2.2"/><path d="M7.5 4.3l11.5 13.5" stroke="#f4f4f4" stroke-width="1"/></svg></div>
<svg class="a" style="left:1296.8px;top:588.5px" width="6.5" height="11" viewBox="0 0 6.5 11"><path d="M6 .5L1 5.5 6 10.5" fill="none" stroke="#b0b0b0" stroke-width="1.1"/></svg>
<div class="t " style="left:1316.80px;top:588.54px;font-size:12.35px;color:#424242;transform:scaleX(1.0190);transform-origin:0 0;">1/4</div>
<svg class="a" style="left:1347.2px;top:588.5px" width="6.5" height="11" viewBox="0 0 6.5 11"><path d="M.5 .5l5 5-5 5" fill="none" stroke="#424242" stroke-width="1.2"/></svg>
<div class="tile" style="left:1214px;top:613.8px;width:221.8px;height:122.5px;border-radius:5px"><svg width="222" height="123" viewBox="0 0 222 123" style="position:absolute;left:0;top:0"><defs><filter id="bwb"><feGaussianBlur stdDeviation="7"/></filter><filter id="bwb2"><feGaussianBlur stdDeviation="0.7"/></filter><linearGradient id="bwbg" x1="0" y1="0" x2="1" y2="0"><stop offset="0" stop-color="#a08070"/><stop offset=".2" stop-color="#d8ccc4"/><stop offset=".38" stop-color="#f2ede2"/><stop offset=".6" stop-color="#f6f4ee"/><stop offset=".8" stop-color="#f0e6d2"/><stop offset="1" stop-color="#dccaa8"/></linearGradient></defs><rect width="222" height="123" fill="url(#bwbg)"/><g filter="url(#bwb)"><rect x="-10" y="-5" width="70" height="30" fill="#e6dcd8"/><rect x="-10" y="25" width="78" height="22" fill="#38343c"/><rect x="-10" y="47" width="74" height="20" fill="#5a6a7c"/><rect x="-10" y="67" width="72" height="18" fill="#34303a"/><rect x="-10" y="85" width="40" height="45" fill="#b07868"/><rect x="186" y="10" width="40" height="70" fill="#a89478"/><rect x="196" y="22" width="24" height="44" fill="#d8c29c"/></g><g filter="url(#bwb2)"><path d="M28,123 C34,96 60,88 90,86 L150,86 C172,88 188,98 196,123Z" fill="#7eaaa8"/><path d="M62,123 C66,100 80,88 100,84 L140,84 C158,90 170,104 172,123Z" fill="#ebe7dd"/><path d="M96,123 C92,100 92,70 96,48 C98,28 106,18 122,18 C138,18 148,28 148,46 C150,60 146,74 144,80 L134,80 C136,60 132,44 120,40 C110,42 106,56 108,74 C108,92 110,110 112,123Z" fill="#231a18"/><path d="M101,48 C101,34 110,28 120,28 C132,28 140,34 140,48 C140,66 132,80 120,80 C108,80 101,66 101,48Z" fill="#c49a7e"/><path d="M98,44 C100,30 110,22 121,22 C134,22 142,30 143,42 C134,36 112,34 98,44Z" fill="#231a18"/><ellipse cx="111.5" cy="55" rx="8" ry="4" fill="rgba(110,120,230,.28)" stroke="#8a7a78" stroke-width=".9"/><ellipse cx="129" cy="55" rx="8" ry="4" fill="rgba(110,120,230,.28)" stroke="#8a7a78" stroke-width=".9"/><path d="M112,80 L128,80 L130,92 L110,92Z" fill="#b08a74"/></g></svg></div>
<div class="mute" style="left:1221.3px;top:706.8px;width:26.3px;height:21.5px"><svg width="26" height="22" viewBox="0 0 26 22"><rect x="10.8" y="4.5" width="4.4" height="8.5" rx="2.2" fill="#f4f4f4"/><path d="M8.3 10.5a4.7 4.7 0 0 0 9.4 0M13 15.3v2.6" fill="none" stroke="#f4f4f4" stroke-width="1"/><path d="M7.5 4.3l11.5 13.5" stroke="#646464" stroke-width="2.2"/><path d="M7.5 4.3l11.5 13.5" stroke="#f4f4f4" stroke-width="1"/></svg></div>
</body></html>
